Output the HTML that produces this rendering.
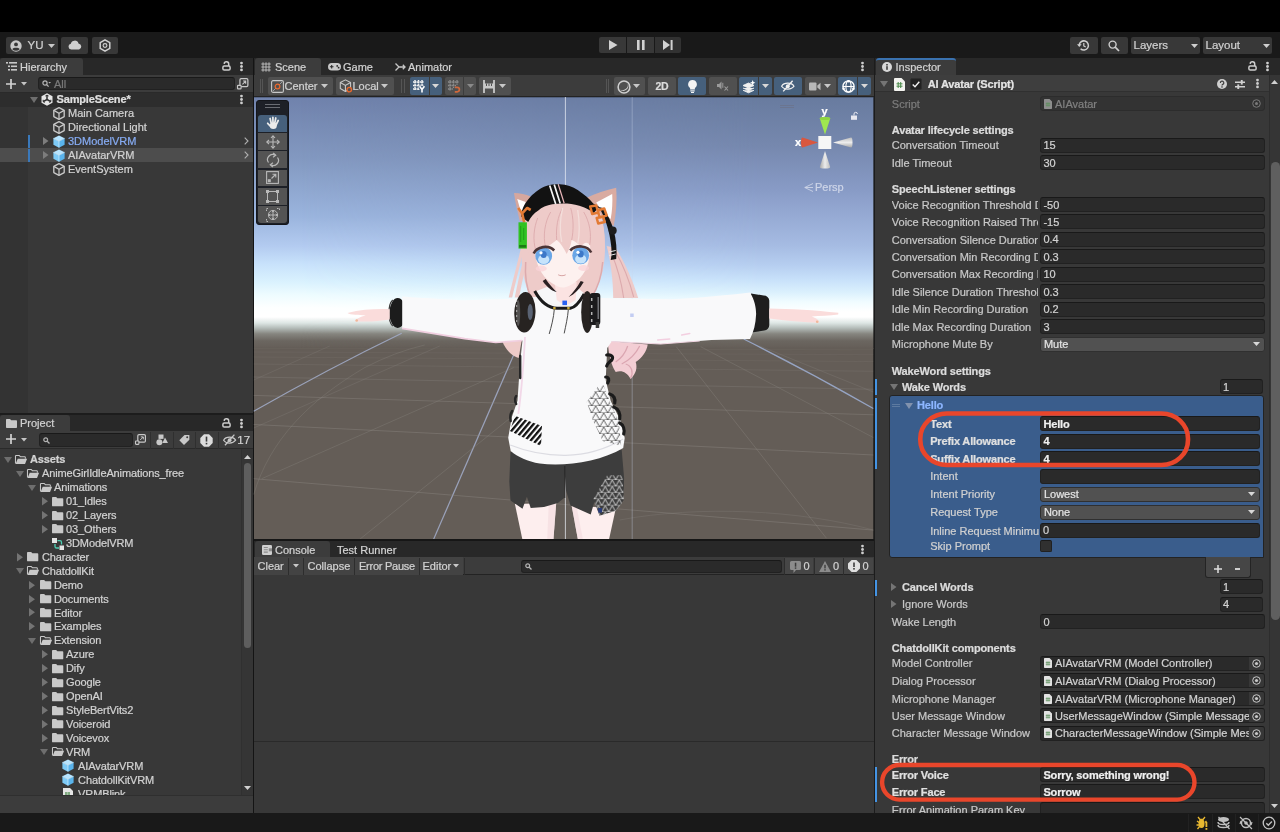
<!DOCTYPE html>
<html lang="en"><head><meta charset="utf-8"><title>Unity - SampleScene</title>
<style>
*{box-sizing:border-box;margin:0;padding:0}
html,body{width:1280px;height:832px;overflow:hidden;background:#191919}
body{position:relative;font-family:"Liberation Sans",sans-serif;font-size:11px;color:#cdcdcd;line-height:14px}
#root{position:absolute;left:0;top:0;width:1280px;height:832px;will-change:transform}
.a{position:absolute}
.t{position:absolute;white-space:nowrap;height:14px;line-height:14px;-webkit-text-stroke:.22px}
.b{font-weight:bold;letter-spacing:-0.15px}
.dim{color:#8a8a8a}
.f{position:absolute;background:#2a2a2a;border:1px solid #212121;border-top-color:#191919;border-radius:3px}
.dd{position:absolute;background:#515151;border:1px solid #303030;border-radius:3px}
.btn{position:absolute;background:#383838;border-radius:2px}
.sb{position:absolute;background:#505050;border-radius:2px;top:77px;height:18px}
.sb.on{background:#46607c}
.tab{position:absolute;background:#3c3c3c;border-radius:3px 3px 0 0}
svg{position:absolute;overflow:visible}
</style></head>
<body>
<div id="root">
<div class="a" style="left:0px;top:0px;width:1280px;height:32px;background:#000;"></div>
<div class="a" style="left:0px;top:32px;width:1280px;height:26px;background:#191919;"></div>
<div class="btn" style="left:6px;top:37px;width:51.5px;height:17px"></div>
<svg style="left:9.5px;top:39.5px" width="12" height="12" viewBox="0 0 12 12"><circle cx="6" cy="6" r="5.7" fill="#c8c8c8"/><circle cx="6" cy="4.4" r="1.9" fill="#383838"/><path d="M2.3 9.2c1-1.9 6.4-1.9 7.4 0a5 5 0 0 1-7.4 0z" fill="#383838"/></svg>
<div class="t " style="left:27.5px;top:38px;color:#d0d0d0;font-size:11.5px">YU</div>
<svg style="left:47.5px;top:43.5px" width="7" height="4" viewBox="0 0 7 4"><path d="M0 0H7L3.5 4Z" fill="#c8c8c8"/></svg>
<div class="btn" style="left:61px;top:37px;width:27px;height:17px"></div>
<svg style="left:67.5px;top:40px" width="14" height="10" viewBox="0 0 14 10"><path d="M3.2 9.6a3 3 0 0 1-.4-5.9 4 4 0 0 1 7.7-.3 3.2 3.2 0 0 1 .6 6.2z" fill="#cfcfcf"/></svg>
<div class="btn" style="left:91.5px;top:37px;width:26px;height:17px"></div>
<svg style="left:98.5px;top:39px" width="12" height="13" viewBox="0 0 12 13"><path d="M6 .8l4.8 2.8v5.8L6 12.2 1.2 9.4V3.6z" fill="none" stroke="#d0d0d0" stroke-width="1.5" stroke-linejoin="round"/><circle cx="6" cy="6.5" r="1.9" fill="none" stroke="#d0d0d0" stroke-width="1.1"/></svg>
<div class="btn" style="left:599px;top:37px;width:27.3px;height:16px;border-radius:2px 0 0 2px"></div>
<div class="btn" style="left:627px;top:37px;width:26.8px;height:16px;border-radius:0"></div>
<div class="btn" style="left:654.5px;top:37px;width:26.5px;height:16px;background:#323232;border-radius:0 2px 2px 0"></div>
<svg style="left:608.5px;top:40px" width="9" height="10" viewBox="0 0 9 10"><path d="M0 0v10l8.5-5z" fill="#d2d2d2"/></svg>
<svg style="left:636.5px;top:40px" width="8" height="10" viewBox="0 0 8 10"><rect x="0" width="2.6" height="10" fill="#d2d2d2"/><rect x="5" width="2.6" height="10" fill="#d2d2d2"/></svg>
<svg style="left:663px;top:40px" width="10" height="10" viewBox="0 0 10 10"><path d="M0 0v10l7-5z" fill="#d2d2d2"/><rect x="7.6" width="2" height="10" fill="#d2d2d2"/></svg>
<div class="btn" style="left:1070px;top:37px;width:27.5px;height:16.5px"></div>
<svg style="left:1077px;top:39px" width="13" height="13" viewBox="0 0 13 13"><path d="M2.2 6.5a4.6 4.6 0 1 1 1.4 3.3" fill="none" stroke="#cfcfcf" stroke-width="1.5"/><path d="M0 5.2h4.6L2.3 8z" fill="#cfcfcf"/><path d="M6.8 4v2.9l1.9 1.1" fill="none" stroke="#cfcfcf" stroke-width="1.2"/></svg>
<div class="btn" style="left:1100.5px;top:37px;width:27.3px;height:16.5px"></div>
<svg style="left:1108px;top:39.5px" width="12" height="12" viewBox="0 0 12 12"><circle cx="4.6" cy="4.6" r="3.5" fill="none" stroke="#cfcfcf" stroke-width="1.4"/><path d="M7.2 7.2l3.8 3.8" stroke="#cfcfcf" stroke-width="1.7"/></svg>
<div class="btn" style="left:1131px;top:37px;width:69px;height:16.5px"></div>
<div class="t " style="left:1133.5px;top:38px;color:#d0d0d0;font-size:11.5px">Layers</div>
<svg style="left:1190.5px;top:43.5px" width="7" height="4" viewBox="0 0 7 4"><path d="M0 0H7L3.5 4Z" fill="#d0d0d0"/></svg>
<div class="btn" style="left:1203px;top:37px;width:69px;height:16.5px"></div>
<div class="t " style="left:1205.5px;top:38px;color:#d0d0d0;font-size:11.5px">Layout</div>
<svg style="left:1262.5px;top:43.5px" width="7" height="4" viewBox="0 0 7 4"><path d="M0 0H7L3.5 4Z" fill="#d0d0d0"/></svg>
<div class="a" style="left:0px;top:813px;width:1280px;height:19px;background:#191919;"></div>
<div class="a" style="left:0px;top:58px;width:252.7px;height:355px;background:#383838;"></div>
<div class="a" style="left:0px;top:58px;width:252.7px;height:17px;background:#282828;"></div>
<div class="tab" style="left:0;top:58px;width:82.5px;height:17px"></div>
<svg style="left:6px;top:62px" width="11" height="9" viewBox="0 0 11 9"><rect x="0" y="0" width="2" height="1.6" fill="#c8c8c8"/><rect x="3" y="0" width="8" height="1.6" fill="#c8c8c8"/><rect x="2" y="3.5" width="2" height="1.6" fill="#c8c8c8"/><rect x="5" y="3.5" width="6" height="1.6" fill="#c8c8c8"/><rect x="2" y="7" width="2" height="1.6" fill="#c8c8c8"/><rect x="5" y="7" width="6" height="1.6" fill="#c8c8c8"/></svg>
<div class="t " style="left:20px;top:60px;color:#d2d2d2">Hierarchy</div>
<svg style="left:221.5px;top:61px" width="9" height="10" viewBox="0 0 9 10"><path d="M2.2 2.9a2.25 2.25 0 0 1 4.5 .2V5" fill="none" stroke="#cdcdcd" stroke-width="1.5"/><rect x=".9" y="5.1" width="7.2" height="4" rx="1.3" fill="none" stroke="#cdcdcd" stroke-width="1.5"/></svg>
<svg style="left:240px;top:62px" width="3" height="9" viewBox="0 0 3 9"><circle cx="1.5" cy="1.1" r="1.4" fill="#cdcdcd"/><circle cx="1.5" cy="4.5" r="1.4" fill="#cdcdcd"/><circle cx="1.5" cy="7.9" r="1.4" fill="#cdcdcd"/></svg>
<div class="a" style="left:0px;top:75px;width:252.7px;height:17.5px;background:#3c3c3c;border-bottom:1px solid #2a2a2a"></div>
<svg style="left:6px;top:79px" width="10" height="10" viewBox="0 0 10 10"><path d="M5 0v10M0 5h10" stroke="#d2d2d2" stroke-width="1.7"/></svg>
<svg style="left:20.5px;top:82.25px" width="6" height="3.5" viewBox="0 0 6 3.5"><path d="M0 0H6L3 3.5Z" fill="#c4c4c4"/></svg>
<div class="f" style="left:37.5px;top:77px;width:197.5px;height:13px;border-radius:3px"></div>
<svg style="left:41.5px;top:80px" width="9" height="8" viewBox="0 0 9 8"><circle cx="3" cy="3" r="2.1" fill="none" stroke="#b4b4b4" stroke-width="1.2"/><path d="M4.6 4.6l2 2" stroke="#b4b4b4" stroke-width="1.3"/><path d="M6.3 2h2.7l-1.35 1.6z" fill="#b4b4b4"/></svg>
<div class="t " style="left:54px;top:77px;color:#7a7a7a">All</div>
<svg style="left:236.8px;top:77.6px" width="11.5" height="11.5" viewBox="0 0 11 11"><rect x="2.8" y=".6" width="7.6" height="7.6" rx="1.2" fill="none" stroke="#c8c8c8" stroke-width="1.2"/><path d="M5.2 6l3-3M5.8 2.9h2.5v2.5" fill="none" stroke="#c8c8c8" stroke-width="1"/><rect x=".5" y="7" width="3.4" height="3.4" rx=".6" fill="#3c3c3c" stroke="#c8c8c8" stroke-width="1.1"/></svg>
<div class="a" style="left:0px;top:106.5px;width:28px;height:306.5px;background:#333333;"></div>
<div class="a" style="left:0px;top:92.5px;width:252.7px;height:14px;background:#2d2d2d;"></div>
<div class="a" style="left:0px;top:148.2px;width:252.7px;height:14px;background:#4d4d4d;"></div>
<div class="a" style="left:28px;top:134.5px;width:1.5px;height:13.2px;background:#3a79bb;"></div>
<div class="a" style="left:28px;top:148.5px;width:1.5px;height:13.2px;background:#3a79bb;"></div>
<svg style="left:29.700000000000003px;top:96.7px" width="8" height="6" viewBox="0 0 8 6"><path d="M0 0H8L4 6Z" fill="#6e6e6e"/></svg>
<svg style="left:41px;top:93px" width="12" height="13" viewBox="0 0 12 13"><path d="M6 .3l5.5 3v6.4L6 12.7.5 9.7V3.3z" fill="#e6e6e6"/><path d="M6 6.5V2.2M6 6.5l3.8 2.1M6 6.5L2.2 8.6" stroke="#2d2d2d" stroke-width="1.5" fill="none"/><path d="M4.4 3l1.6-.9 1.6.9M9.8 6.8v1.8l-1.5.9M2.2 6.8v1.8l1.5.9" stroke="#2d2d2d" stroke-width="1" fill="none"/></svg>
<div class="t b" style="left:56.5px;top:92px;color:#e0e0e0">SampleScene*</div>
<svg style="left:240px;top:95px" width="3" height="9" viewBox="0 0 3 9"><circle cx="1.5" cy="1.1" r="1.4" fill="#cdcdcd"/><circle cx="1.5" cy="4.5" r="1.4" fill="#cdcdcd"/><circle cx="1.5" cy="7.9" r="1.4" fill="#cdcdcd"/></svg>
<svg style="left:53px;top:107px" width="12" height="13" viewBox="0 0 12 13"><path d="M6 .7l5.2 2.7v6.2L6 12.3.8 9.6V3.4z" fill="none" stroke="#c8c8c8" stroke-width="1.35" stroke-linejoin="round"/><path d="M.8 3.4L6 6.2l5.2-2.8M6 6.2v6.1" fill="none" stroke="#c8c8c8" stroke-width="1.25"/></svg>
<div class="t " style="left:68px;top:106px;color:#d2d2d2">Main Camera</div>
<svg style="left:53px;top:120.9px" width="12" height="13" viewBox="0 0 12 13"><path d="M6 .7l5.2 2.7v6.2L6 12.3.8 9.6V3.4z" fill="none" stroke="#c8c8c8" stroke-width="1.35" stroke-linejoin="round"/><path d="M.8 3.4L6 6.2l5.2-2.8M6 6.2v6.1" fill="none" stroke="#c8c8c8" stroke-width="1.25"/></svg>
<div class="t " style="left:68px;top:120px;color:#d2d2d2">Directional Light</div>
<svg style="left:42.95px;top:137.3px" width="5.5" height="8" viewBox="0 0 5.5 8"><path d="M0 0V8L5.5 4Z" fill="#7d7d7d"/></svg>
<svg style="left:53px;top:134.8px" width="12" height="13" viewBox="0 0 12 13"><path d="M6 .4l5.6 2.9L6 6.2.4 3.3z" fill="#b6e4ff"/><path d="M.4 3.3L6 6.2v6.5L.4 9.8z" fill="#7ecbf7"/><path d="M11.6 3.3L6 6.2v6.5l5.6-2.9z" fill="#5ab4ec"/><path d="M.4 3.3L6 6.2l5.6-2.9M6 6.2v6.4" fill="none" stroke="#e8f6ff" stroke-width=".6"/></svg>
<svg style="left:243.5px;top:137.3px" width="5" height="8" viewBox="0 0 5 8"><path d="M.7.7L4 4 .7 7.3" fill="none" stroke="#b0b0b0" stroke-width="1.1"/></svg>
<div class="t " style="left:68px;top:134px;color:#86abf2">3DModelVRM</div>
<svg style="left:42.95px;top:151.3px" width="5.5" height="8" viewBox="0 0 5.5 8"><path d="M0 0V8L5.5 4Z" fill="#7d7d7d"/></svg>
<svg style="left:53px;top:148.8px" width="12" height="13" viewBox="0 0 12 13"><path d="M6 .4l5.6 2.9L6 6.2.4 3.3z" fill="#b6e4ff"/><path d="M.4 3.3L6 6.2v6.5L.4 9.8z" fill="#7ecbf7"/><path d="M11.6 3.3L6 6.2v6.5l5.6-2.9z" fill="#5ab4ec"/><path d="M.4 3.3L6 6.2l5.6-2.9M6 6.2v6.4" fill="none" stroke="#e8f6ff" stroke-width=".6"/></svg>
<svg style="left:243.5px;top:151.3px" width="5" height="8" viewBox="0 0 5 8"><path d="M.7.7L4 4 .7 7.3" fill="none" stroke="#b0b0b0" stroke-width="1.1"/></svg>
<div class="t " style="left:68px;top:148px;color:#d2d2d2">AIAvatarVRM</div>
<svg style="left:53px;top:162.7px" width="12" height="13" viewBox="0 0 12 13"><path d="M6 .7l5.2 2.7v6.2L6 12.3.8 9.6V3.4z" fill="none" stroke="#c8c8c8" stroke-width="1.35" stroke-linejoin="round"/><path d="M.8 3.4L6 6.2l5.2-2.8M6 6.2v6.1" fill="none" stroke="#c8c8c8" stroke-width="1.25"/></svg>
<div class="t " style="left:68px;top:162px;color:#d2d2d2">EventSystem</div>
<div class="a" style="left:0px;top:413px;width:252.7px;height:1.5px;background:#1c1c1c;"></div>
<div class="a" style="left:0px;top:414.5px;width:252.7px;height:398.5px;background:#383838;"></div>
<div class="a" style="left:0px;top:414.5px;width:252.7px;height:16.3px;background:#282828;"></div>
<div class="tab" style="left:0;top:414.5px;width:69.5px;height:16.3px"></div>
<svg style="left:6px;top:418.5px" width="11" height="9" viewBox="0 0 11 9"><path d="M0 8.2V.8A.8.8 0 0 1 .8 0h3.2l1.2 1.3h5a.8.8 0 0 1 .8.8v6.1a.8.8 0 0 1-.8.8H.8A.8.8 0 0 1 0 8.2z" fill="#c8c8c8"/></svg>
<div class="t " style="left:20px;top:416px;color:#d2d2d2">Project</div>
<svg style="left:221.5px;top:417.5px" width="9" height="10" viewBox="0 0 9 10"><path d="M2.2 2.9a2.25 2.25 0 0 1 4.5 .2V5" fill="none" stroke="#cdcdcd" stroke-width="1.5"/><rect x=".9" y="5.1" width="7.2" height="4" rx="1.3" fill="none" stroke="#cdcdcd" stroke-width="1.5"/></svg>
<svg style="left:240px;top:418.5px" width="3" height="9" viewBox="0 0 3 9"><circle cx="1.5" cy="1.1" r="1.4" fill="#cdcdcd"/><circle cx="1.5" cy="4.5" r="1.4" fill="#cdcdcd"/><circle cx="1.5" cy="7.9" r="1.4" fill="#cdcdcd"/></svg>
<div class="a" style="left:0px;top:430.8px;width:252.7px;height:18.5px;background:#3c3c3c;border-bottom:1px solid #2a2a2a"></div>
<svg style="left:6px;top:434px" width="10" height="10" viewBox="0 0 10 10"><path d="M5 0v10M0 5h10" stroke="#d2d2d2" stroke-width="1.7"/></svg>
<svg style="left:20.5px;top:437.75px" width="6" height="3.5" viewBox="0 0 6 3.5"><path d="M0 0H6L3 3.5Z" fill="#c4c4c4"/></svg>
<div class="f" style="left:39px;top:433px;width:93.5px;height:13.5px"></div>
<svg style="left:43px;top:436.5px" width="7" height="7" viewBox="0 0 7 7"><circle cx="2.7" cy="2.7" r="1.9" fill="none" stroke="#b4b4b4" stroke-width="1.2"/><path d="M4.2 4.2l2.3 2.3" stroke="#b4b4b4" stroke-width="1.3"/></svg>
<svg style="left:134.5px;top:434px" width="11" height="11" viewBox="0 0 11 11"><rect x="2.8" y=".6" width="7.6" height="7.6" rx="1.2" fill="none" stroke="#c8c8c8" stroke-width="1.2"/><path d="M5.2 6l3-3M5.8 2.9h2.5v2.5" fill="none" stroke="#c8c8c8" stroke-width="1"/><rect x=".5" y="7" width="3.4" height="3.4" rx=".6" fill="#3c3c3c" stroke="#c8c8c8" stroke-width="1.1"/></svg>
<div class="a" style="left:150.3px;top:431.5px;width:1px;height:17px;background:#2f2f2f;"></div>
<div class="a" style="left:172.5px;top:431.5px;width:1px;height:17px;background:#2f2f2f;"></div>
<div class="a" style="left:195px;top:431.5px;width:1px;height:17px;background:#2f2f2f;"></div>
<div class="a" style="left:217.5px;top:431.5px;width:1px;height:17px;background:#2f2f2f;"></div>
<svg style="left:155.5px;top:434px" width="12" height="12" viewBox="0 0 12 12"><circle cx="3.4" cy="8.3" r="3" fill="#c8c8c8"/><rect x="2.5" y=".5" width="5" height="4.4" fill="#c8c8c8"/><path d="M9 3.6l3 5.4H6.4z" fill="#c8c8c8"/></svg>
<svg style="left:178.5px;top:435px" width="11" height="10" viewBox="0 0 11 10"><path d="M5.5 0H10.4V4.8L5 10 .3 5.3z" fill="#c8c8c8"/><circle cx="8.2" cy="2.2" r="1" fill="#3c3c3c"/></svg>
<svg style="left:199.5px;top:433.5px" width="13" height="13" viewBox="0 0 13 13"><path d="M4 .3h5l3.7 3.7v5L9 12.7H4L.3 9V4z" fill="#dcdcdc"/><rect x="5.7" y="2.6" width="1.6" height="5" fill="#3c3c3c"/><rect x="5.7" y="8.8" width="1.6" height="1.6" fill="#3c3c3c"/></svg>
<svg style="left:222.5px;top:434px" width="14" height="12" viewBox="0 0 14 12"><path d="M.6 6.2C3 2.2 10 2.2 12.6 6.2 10 10 3 10 .6 6.2z" fill="none" stroke="#c8c8c8" stroke-width="1.2"/><circle cx="6.6" cy="6.2" r="1.9" fill="#c8c8c8"/><path d="M2 11.2L11.4.6" stroke="#c8c8c8" stroke-width="1.3"/></svg>
<div class="t " style="left:237.3px;top:433px;color:#d2d2d2;font-size:11.5px">17</div>
<div class="a" style="left:241.4px;top:449.3px;width:11.3px;height:345.5px;background:#353535;border-left:1px solid #303030"></div>
<svg style="left:243.8px;top:454.5px" width="7" height="4" viewBox="0 0 7 4"><path d="M0 4h7L3.5 0z" fill="#d0d0d0"/></svg>
<div class="a" style="left:243.8px;top:462.5px;width:7.2px;height:185px;background:#5e5e5e;border-radius:3.6px"></div>
<svg style="left:243.8px;top:785.5px" width="7" height="4" viewBox="0 0 7 4"><path d="M0 0h7L3.5 4z" fill="#d0d0d0"/></svg>
<div class="a" style="left:0;top:449px;width:241px;height:346px;overflow:hidden">
<svg style="left:3.5px;top:7.800000000000001px" width="8" height="6" viewBox="0 0 8 6"><path d="M0 0H8L4 6Z" fill="#6e6e6e"/></svg>
<svg style="left:14.8px;top:5.8px" width="12.2" height="9.4" viewBox="0 0 13 10"><path d="M.5 9V1.2a.7.7 0 0 1 .7-.7h3.3l1.2 1.3h4.6a.7.7 0 0 1 .7.7V4" fill="none" stroke="#c9c9c9" stroke-width="1.1"/><path d="M.6 9.6L2.9 4h10L10.7 9.6z" fill="#c9c9c9"/></svg>
<div class="t b" style="left:29.9px;top:3px;color:#d2d2d2;letter-spacing:-0.12px">Assets</div>
<svg style="left:15.8px;top:21.730000000000008px" width="8" height="6" viewBox="0 0 8 6"><path d="M0 0H8L4 6Z" fill="#6e6e6e"/></svg>
<svg style="left:27.2px;top:19.730000000000008px" width="12.2" height="9.4" viewBox="0 0 13 10"><path d="M.5 9V1.2a.7.7 0 0 1 .7-.7h3.3l1.2 1.3h4.6a.7.7 0 0 1 .7.7V4" fill="none" stroke="#c9c9c9" stroke-width="1.1"/><path d="M.6 9.6L2.9 4h10L10.7 9.6z" fill="#c9c9c9"/></svg>
<div class="t " style="left:41.95px;top:17px;color:#d2d2d2;letter-spacing:-0.12px">AnimeGirlIdleAnimations_free</div>
<svg style="left:28.1px;top:35.66000000000001px" width="8" height="6" viewBox="0 0 8 6"><path d="M0 0H8L4 6Z" fill="#6e6e6e"/></svg>
<svg style="left:39.599999999999994px;top:33.66000000000001px" width="12.2" height="9.4" viewBox="0 0 13 10"><path d="M.5 9V1.2a.7.7 0 0 1 .7-.7h3.3l1.2 1.3h4.6a.7.7 0 0 1 .7.7V4" fill="none" stroke="#c9c9c9" stroke-width="1.1"/><path d="M.6 9.6L2.9 4h10L10.7 9.6z" fill="#c9c9c9"/></svg>
<div class="t " style="left:54px;top:31px;color:#d2d2d2;letter-spacing:-0.12px">Animations</div>
<svg style="left:41.7px;top:48.04000000000002px" width="6" height="8.5" viewBox="0 0 6 8.5"><path d="M0 0V8.5L6 4.25Z" fill="#747474"/></svg>
<svg style="left:52px;top:47.59000000000002px" width="11.3" height="9.4" viewBox="0 0 12 10"><path d="M0 9V.9A.9.9 0 0 1 .9 0h3.5l1.3 1.4h5.4a.9.9 0 0 1 .9.9V9a.9.9 0 0 1-.9.9H.9A.9.9 0 0 1 0 9z" fill="#c9c9c9"/></svg>
<div class="t " style="left:66.05000000000001px;top:45px;color:#d2d2d2;letter-spacing:-0.12px">01_Idles</div>
<svg style="left:41.7px;top:61.97000000000003px" width="6" height="8.5" viewBox="0 0 6 8.5"><path d="M0 0V8.5L6 4.25Z" fill="#747474"/></svg>
<svg style="left:52px;top:61.520000000000024px" width="11.3" height="9.4" viewBox="0 0 12 10"><path d="M0 9V.9A.9.9 0 0 1 .9 0h3.5l1.3 1.4h5.4a.9.9 0 0 1 .9.9V9a.9.9 0 0 1-.9.9H.9A.9.9 0 0 1 0 9z" fill="#c9c9c9"/></svg>
<div class="t " style="left:66.05000000000001px;top:59px;color:#d2d2d2;letter-spacing:-0.12px">02_Layers</div>
<svg style="left:41.7px;top:75.89999999999998px" width="6" height="8.5" viewBox="0 0 6 8.5"><path d="M0 0V8.5L6 4.25Z" fill="#747474"/></svg>
<svg style="left:52px;top:75.44999999999997px" width="11.3" height="9.4" viewBox="0 0 12 10"><path d="M0 9V.9A.9.9 0 0 1 .9 0h3.5l1.3 1.4h5.4a.9.9 0 0 1 .9.9V9a.9.9 0 0 1-.9.9H.9A.9.9 0 0 1 0 9z" fill="#c9c9c9"/></svg>
<div class="t " style="left:66.05000000000001px;top:73px;color:#d2d2d2;letter-spacing:-0.12px">03_Others</div>
<svg style="left:51.7px;top:88.58000000000004px" width="12" height="12" viewBox="0 0 12 12"><rect x="0" y="0" width="5" height="5" fill="#e4e4e4"/><rect x="7.5" y="7.5" width="4.5" height="4.5" fill="#e4e4e4"/><path d="M3 6v2.4a1.6 1.6 0 0 0 1.6 1.6H7M9.5 6.5V4.2A1.6 1.6 0 0 0 7.9 2.6H5.5" fill="none" stroke="#4fd1b4" stroke-width="1.3"/></svg>
<div class="t " style="left:66.05000000000001px;top:87px;color:#d2d2d2;letter-spacing:-0.12px">3DModelVRM</div>
<svg style="left:17.1px;top:103.75999999999999px" width="6" height="8.5" viewBox="0 0 6 8.5"><path d="M0 0V8.5L6 4.25Z" fill="#747474"/></svg>
<svg style="left:27.2px;top:103.30999999999999px" width="11.3" height="9.4" viewBox="0 0 12 10"><path d="M0 9V.9A.9.9 0 0 1 .9 0h3.5l1.3 1.4h5.4a.9.9 0 0 1 .9.9V9a.9.9 0 0 1-.9.9H.9A.9.9 0 0 1 0 9z" fill="#c9c9c9"/></svg>
<div class="t " style="left:41.95px;top:101px;color:#d2d2d2;letter-spacing:-0.12px">Character</div>
<svg style="left:15.8px;top:119.24000000000005px" width="8" height="6" viewBox="0 0 8 6"><path d="M0 0H8L4 6Z" fill="#6e6e6e"/></svg>
<svg style="left:27.2px;top:117.24000000000005px" width="12.2" height="9.4" viewBox="0 0 13 10"><path d="M.5 9V1.2a.7.7 0 0 1 .7-.7h3.3l1.2 1.3h4.6a.7.7 0 0 1 .7.7V4" fill="none" stroke="#c9c9c9" stroke-width="1.1"/><path d="M.6 9.6L2.9 4h10L10.7 9.6z" fill="#c9c9c9"/></svg>
<div class="t " style="left:41.95px;top:115px;color:#d2d2d2;letter-spacing:-0.12px">ChatdollKit</div>
<svg style="left:29.4px;top:131.62px" width="6" height="8.5" viewBox="0 0 6 8.5"><path d="M0 0V8.5L6 4.25Z" fill="#747474"/></svg>
<svg style="left:39.599999999999994px;top:131.17000000000002px" width="11.3" height="9.4" viewBox="0 0 12 10"><path d="M0 9V.9A.9.9 0 0 1 .9 0h3.5l1.3 1.4h5.4a.9.9 0 0 1 .9.9V9a.9.9 0 0 1-.9.9H.9A.9.9 0 0 1 0 9z" fill="#c9c9c9"/></svg>
<div class="t " style="left:54px;top:129px;color:#d2d2d2;letter-spacing:-0.12px">Demo</div>
<svg style="left:29.4px;top:145.54999999999995px" width="6" height="8.5" viewBox="0 0 6 8.5"><path d="M0 0V8.5L6 4.25Z" fill="#747474"/></svg>
<svg style="left:39.599999999999994px;top:145.09999999999997px" width="11.3" height="9.4" viewBox="0 0 12 10"><path d="M0 9V.9A.9.9 0 0 1 .9 0h3.5l1.3 1.4h5.4a.9.9 0 0 1 .9.9V9a.9.9 0 0 1-.9.9H.9A.9.9 0 0 1 0 9z" fill="#c9c9c9"/></svg>
<div class="t " style="left:54px;top:143px;color:#d2d2d2;letter-spacing:-0.12px">Documents</div>
<svg style="left:29.4px;top:159.48000000000002px" width="6" height="8.5" viewBox="0 0 6 8.5"><path d="M0 0V8.5L6 4.25Z" fill="#747474"/></svg>
<svg style="left:39.599999999999994px;top:159.03000000000003px" width="11.3" height="9.4" viewBox="0 0 12 10"><path d="M0 9V.9A.9.9 0 0 1 .9 0h3.5l1.3 1.4h5.4a.9.9 0 0 1 .9.9V9a.9.9 0 0 1-.9.9H.9A.9.9 0 0 1 0 9z" fill="#c9c9c9"/></svg>
<div class="t " style="left:54px;top:157px;color:#d2d2d2;letter-spacing:-0.12px">Editor</div>
<svg style="left:29.4px;top:173.40999999999997px" width="6" height="8.5" viewBox="0 0 6 8.5"><path d="M0 0V8.5L6 4.25Z" fill="#747474"/></svg>
<svg style="left:39.599999999999994px;top:172.95999999999998px" width="11.3" height="9.4" viewBox="0 0 12 10"><path d="M0 9V.9A.9.9 0 0 1 .9 0h3.5l1.3 1.4h5.4a.9.9 0 0 1 .9.9V9a.9.9 0 0 1-.9.9H.9A.9.9 0 0 1 0 9z" fill="#c9c9c9"/></svg>
<div class="t " style="left:54px;top:170px;color:#d2d2d2;letter-spacing:-0.12px">Examples</div>
<svg style="left:28.1px;top:188.89000000000004px" width="8" height="6" viewBox="0 0 8 6"><path d="M0 0H8L4 6Z" fill="#6e6e6e"/></svg>
<svg style="left:39.599999999999994px;top:186.89000000000004px" width="12.2" height="9.4" viewBox="0 0 13 10"><path d="M.5 9V1.2a.7.7 0 0 1 .7-.7h3.3l1.2 1.3h4.6a.7.7 0 0 1 .7.7V4" fill="none" stroke="#c9c9c9" stroke-width="1.1"/><path d="M.6 9.6L2.9 4h10L10.7 9.6z" fill="#c9c9c9"/></svg>
<div class="t " style="left:54px;top:184px;color:#d2d2d2;letter-spacing:-0.12px">Extension</div>
<svg style="left:41.7px;top:201.26999999999998px" width="6" height="8.5" viewBox="0 0 6 8.5"><path d="M0 0V8.5L6 4.25Z" fill="#747474"/></svg>
<svg style="left:52px;top:200.82px" width="11.3" height="9.4" viewBox="0 0 12 10"><path d="M0 9V.9A.9.9 0 0 1 .9 0h3.5l1.3 1.4h5.4a.9.9 0 0 1 .9.9V9a.9.9 0 0 1-.9.9H.9A.9.9 0 0 1 0 9z" fill="#c9c9c9"/></svg>
<div class="t " style="left:66.05000000000001px;top:198px;color:#d2d2d2;letter-spacing:-0.12px">Azure</div>
<svg style="left:41.7px;top:215.20000000000005px" width="6" height="8.5" viewBox="0 0 6 8.5"><path d="M0 0V8.5L6 4.25Z" fill="#747474"/></svg>
<svg style="left:52px;top:214.75000000000006px" width="11.3" height="9.4" viewBox="0 0 12 10"><path d="M0 9V.9A.9.9 0 0 1 .9 0h3.5l1.3 1.4h5.4a.9.9 0 0 1 .9.9V9a.9.9 0 0 1-.9.9H.9A.9.9 0 0 1 0 9z" fill="#c9c9c9"/></svg>
<div class="t " style="left:66.05000000000001px;top:212px;color:#d2d2d2;letter-spacing:-0.12px">Dify</div>
<svg style="left:41.7px;top:229.13px" width="6" height="8.5" viewBox="0 0 6 8.5"><path d="M0 0V8.5L6 4.25Z" fill="#747474"/></svg>
<svg style="left:52px;top:228.68px" width="11.3" height="9.4" viewBox="0 0 12 10"><path d="M0 9V.9A.9.9 0 0 1 .9 0h3.5l1.3 1.4h5.4a.9.9 0 0 1 .9.9V9a.9.9 0 0 1-.9.9H.9A.9.9 0 0 1 0 9z" fill="#c9c9c9"/></svg>
<div class="t " style="left:66.05000000000001px;top:226px;color:#d2d2d2;letter-spacing:-0.12px">Google</div>
<svg style="left:41.7px;top:243.05999999999995px" width="6" height="8.5" viewBox="0 0 6 8.5"><path d="M0 0V8.5L6 4.25Z" fill="#747474"/></svg>
<svg style="left:52px;top:242.60999999999996px" width="11.3" height="9.4" viewBox="0 0 12 10"><path d="M0 9V.9A.9.9 0 0 1 .9 0h3.5l1.3 1.4h5.4a.9.9 0 0 1 .9.9V9a.9.9 0 0 1-.9.9H.9A.9.9 0 0 1 0 9z" fill="#c9c9c9"/></svg>
<div class="t " style="left:66.05000000000001px;top:240px;color:#d2d2d2;letter-spacing:-0.12px">OpenAI</div>
<svg style="left:41.7px;top:256.99px" width="6" height="8.5" viewBox="0 0 6 8.5"><path d="M0 0V8.5L6 4.25Z" fill="#747474"/></svg>
<svg style="left:52px;top:256.54px" width="11.3" height="9.4" viewBox="0 0 12 10"><path d="M0 9V.9A.9.9 0 0 1 .9 0h3.5l1.3 1.4h5.4a.9.9 0 0 1 .9.9V9a.9.9 0 0 1-.9.9H.9A.9.9 0 0 1 0 9z" fill="#c9c9c9"/></svg>
<div class="t " style="left:66.05000000000001px;top:254px;color:#d2d2d2;letter-spacing:-0.12px">StyleBertVits2</div>
<svg style="left:41.7px;top:270.9200000000001px" width="6" height="8.5" viewBox="0 0 6 8.5"><path d="M0 0V8.5L6 4.25Z" fill="#747474"/></svg>
<svg style="left:52px;top:270.4700000000001px" width="11.3" height="9.4" viewBox="0 0 12 10"><path d="M0 9V.9A.9.9 0 0 1 .9 0h3.5l1.3 1.4h5.4a.9.9 0 0 1 .9.9V9a.9.9 0 0 1-.9.9H.9A.9.9 0 0 1 0 9z" fill="#c9c9c9"/></svg>
<div class="t " style="left:66.05000000000001px;top:268px;color:#d2d2d2;letter-spacing:-0.12px">Voiceroid</div>
<svg style="left:41.7px;top:284.85px" width="6" height="8.5" viewBox="0 0 6 8.5"><path d="M0 0V8.5L6 4.25Z" fill="#747474"/></svg>
<svg style="left:52px;top:284.40000000000003px" width="11.3" height="9.4" viewBox="0 0 12 10"><path d="M0 9V.9A.9.9 0 0 1 .9 0h3.5l1.3 1.4h5.4a.9.9 0 0 1 .9.9V9a.9.9 0 0 1-.9.9H.9A.9.9 0 0 1 0 9z" fill="#c9c9c9"/></svg>
<div class="t " style="left:66.05000000000001px;top:282px;color:#d2d2d2;letter-spacing:-0.12px">Voicevox</div>
<svg style="left:40.400000000000006px;top:300.33px" width="8" height="6" viewBox="0 0 8 6"><path d="M0 0H8L4 6Z" fill="#6e6e6e"/></svg>
<svg style="left:52px;top:298.33px" width="12.2" height="9.4" viewBox="0 0 13 10"><path d="M.5 9V1.2a.7.7 0 0 1 .7-.7h3.3l1.2 1.3h4.6a.7.7 0 0 1 .7.7V4" fill="none" stroke="#c9c9c9" stroke-width="1.1"/><path d="M.6 9.6L2.9 4h10L10.7 9.6z" fill="#c9c9c9"/></svg>
<div class="t " style="left:66.05000000000001px;top:296px;color:#d2d2d2;letter-spacing:-0.12px">VRM</div>
<svg style="left:62.099999999999994px;top:310.46000000000004px" width="12" height="13" viewBox="0 0 12 13"><path d="M6 .4l5.6 2.9L6 6.2.4 3.3z" fill="#b6e4ff"/><path d="M.4 3.3L6 6.2v6.5L.4 9.8z" fill="#7ecbf7"/><path d="M11.6 3.3L6 6.2v6.5l5.6-2.9z" fill="#5ab4ec"/><path d="M.4 3.3L6 6.2l5.6-2.9M6 6.2v6.4" fill="none" stroke="#e8f6ff" stroke-width=".6"/></svg>
<div class="t " style="left:78.1px;top:310px;color:#d2d2d2;letter-spacing:-0.12px">AIAvatarVRM</div>
<svg style="left:62.099999999999994px;top:324.39px" width="12" height="13" viewBox="0 0 12 13"><path d="M6 .4l5.6 2.9L6 6.2.4 3.3z" fill="#b6e4ff"/><path d="M.4 3.3L6 6.2v6.5L.4 9.8z" fill="#7ecbf7"/><path d="M11.6 3.3L6 6.2v6.5l5.6-2.9z" fill="#5ab4ec"/><path d="M.4 3.3L6 6.2l5.6-2.9M6 6.2v6.4" fill="none" stroke="#e8f6ff" stroke-width=".6"/></svg>
<div class="t " style="left:78.1px;top:324px;color:#d2d2d2;letter-spacing:-0.12px">ChatdollKitVRM</div>
<svg style="left:63.099999999999994px;top:338.81999999999994px" width="10" height="12" viewBox="0 0 10 12"><path d="M0 0h7l3 3v9H0z" fill="#e6e6e6"/><path d="M3 4v4M6 4v4M2 5h5M2 7h5" stroke="#4a8a4a" stroke-width=".8"/></svg>
<div class="t " style="left:78.1px;top:338px;color:#d2d2d2;letter-spacing:-0.12px">VRMBlink</div>
</div>
<div class="a" style="left:0px;top:795px;width:252.7px;height:18px;background:#3c3c3c;border-top:1px solid #2f2f2f"></div>
<div class="a" style="left:252.7px;top:58px;width:1.6px;height:755px;background:#141414;"></div>
<div class="a" style="left:254.3px;top:58px;width:619.3px;height:17px;background:#282828;"></div>
<div class="tab" style="left:254.5px;top:58px;width:66.5px;height:17px"></div>
<svg style="left:261px;top:61.5px" width="10" height="10" viewBox="0 0 10 10"><path d="M2 .3v9.4M5 .3v9.4M8 .3v9.4M.3 2h9.4M.3 5h9.4M.3 8h9.4" stroke="#c8c8c8" stroke-width=".85"/></svg>
<div class="t " style="left:275px;top:60px;color:#d2d2d2">Scene</div>
<svg style="left:328px;top:62.5px" width="13" height="8" viewBox="0 0 13 8"><rect x="0" y="0" width="13" height="7.6" rx="3.8" fill="#c8c8c8"/><path d="M3.7 2v3.6M1.9 3.8h3.6" stroke="#282828" stroke-width="1.1"/><circle cx="9.2" cy="2.9" r=".9" fill="#282828"/><circle cx="10.6" cy="4.7" r=".9" fill="#282828"/></svg>
<div class="t " style="left:343px;top:60px;color:#d2d2d2">Game</div>
<svg style="left:395px;top:61.5px" width="11" height="10" viewBox="0 0 11 10"><path d="M.5 1.5l3.5 3.5-3.5 3.5M4 5h6M7.8 2.8L10 5 7.8 7.2" fill="none" stroke="#c8c8c8" stroke-width="1.3"/></svg>
<div class="t " style="left:408px;top:60px;color:#d2d2d2">Animator</div>
<svg style="left:860.5px;top:62px" width="3" height="9" viewBox="0 0 3 9"><circle cx="1.5" cy="1.1" r="1.4" fill="#cdcdcd"/><circle cx="1.5" cy="4.5" r="1.4" fill="#cdcdcd"/><circle cx="1.5" cy="7.9" r="1.4" fill="#cdcdcd"/></svg>
<div class="a" style="left:254.3px;top:75px;width:619.3px;height:22px;background:#3c3c3c;border-bottom:1px solid #232323"></div>
<div class="a" style="left:259.5px;top:79px;width:1px;height:14px;background:#555;"></div>
<div class="a" style="left:262px;top:79px;width:1px;height:14px;background:#555;"></div>
<div class="sb" style="left:268px;width:64.5px"></div>
<svg style="left:271px;top:80px" width="13" height="13" viewBox="0 0 13 13"><rect x=".6" y=".6" width="11.8" height="11.8" rx="1.5" fill="none" stroke="#c8c8c8" stroke-width="1.1"/><path d="M2 11L11 2" stroke="#a8a8a8" stroke-width=".9"/><circle cx="6.5" cy="6.5" r="2.3" fill="#505050" stroke="#e8672c" stroke-width="1.3"/></svg>
<div class="t " style="left:284.5px;top:79px;color:#d2d2d2">Center</div>
<svg style="left:321px;top:84.2px" width="7" height="4" viewBox="0 0 7 4"><path d="M0 0H7L3.5 4Z" fill="#c8c8c8"/></svg>
<div class="sb" style="left:335.7px;width:58px"></div>
<svg style="left:338.5px;top:79px" width="15" height="15" viewBox="0 0 14 14"><path d="M6 .8l4.8 2.5v5.6L6 11.6 1.2 8.9V3.3z" fill="none" stroke="#c8c8c8" stroke-width="1" stroke-linejoin="round"/><path d="M1.2 3.3L6 6l4.8-2.7M6 6v5.6" fill="none" stroke="#c8c8c8" stroke-width="1"/><circle cx="9.6" cy="9.9" r="2.1" fill="#505050" stroke="#e8672c" stroke-width="1.25"/></svg>
<div class="t " style="left:352.5px;top:79px;color:#d2d2d2">Local</div>
<svg style="left:381px;top:84.2px" width="7" height="4" viewBox="0 0 7 4"><path d="M0 0H7L3.5 4Z" fill="#c8c8c8"/></svg>
<div class="a" style="left:401px;top:79px;width:1px;height:14px;background:#555;"></div>
<div class="a" style="left:403.5px;top:79px;width:1px;height:14px;background:#555;"></div>
<div class="sb on" style="left:410px;width:19px;border-radius:2px 0 0 2px"></div>
<div class="sb on" style="left:430px;width:12px;border-radius:0 2px 2px 0"></div>
<svg style="left:413px;top:80px" width="12" height="13" viewBox="0 0 12 13"><path d="M2 0v10.5M5.5 0v10.5M9 0v6M0 2h11M0 5.5h11M0 9h7" stroke="#f4f4f4" stroke-width="1.5" stroke-dasharray="1.3 .45"/><path d="M6.6 6.3l2.4 3.2 2.4-3.2M9 9.5V12.6" fill="none" stroke="#46607c" stroke-width="3.4"/><path d="M6.6 6.3l2.4 3.2 2.4-3.2M9 9.5V12.6" fill="none" stroke="#fff" stroke-width="1.6"/></svg>
<svg style="left:432px;top:84.2px" width="7" height="4" viewBox="0 0 7 4"><path d="M0 0H7L3.5 4Z" fill="#d8d8d8"/></svg>
<div class="sb" style="left:445px;width:18px;border-radius:2px 0 0 2px"></div>
<div class="sb" style="left:464px;width:12px;border-radius:0 2px 2px 0"></div>
<svg style="left:448px;top:80px" width="12" height="13" viewBox="0 0 12 13"><path d="M2 0v11M5.5 0v8M9 0v5M0 2h11M0 5.5h8M0 9h5" stroke="#8c8c8c" stroke-width="1.3" stroke-dasharray="1.3 .45"/><path d="M6.8 7.4h2.4a2.2 2.2 0 0 1 0 4.4H6.8" fill="none" stroke="#d0683c" stroke-width="1.7"/></svg>
<svg style="left:466.5px;top:84.2px" width="7" height="4" viewBox="0 0 7 4"><path d="M0 0H7L3.5 4Z" fill="#8a8a8a"/></svg>
<div class="sb" style="left:479px;width:32px"></div>
<svg style="left:482.5px;top:80px" width="12" height="13" viewBox="0 0 12 13"><path d="M1 0v13M11 0v13" stroke="#c8c8c8" stroke-width="1.8"/><rect x="1" y="3.5" width="10" height="5" fill="#c8c8c8"/><path d="M3.5 3.5v2.5M6 3.5v2.5M8.5 3.5v2.5" stroke="#505050" stroke-width="1"/></svg>
<svg style="left:499px;top:84.2px" width="7" height="4" viewBox="0 0 7 4"><path d="M0 0H7L3.5 4Z" fill="#c8c8c8"/></svg>
<div class="a" style="left:605.7px;top:79px;width:1px;height:14px;background:#555;"></div>
<div class="a" style="left:608.2px;top:79px;width:1px;height:14px;background:#555;"></div>
<div class="sb" style="left:613.7px;width:31.3px"></div>
<svg style="left:617px;top:79.5px" width="14" height="14" viewBox="0 0 14 14"><circle cx="7" cy="7" r="5.9" fill="none" stroke="#d0d0d0" stroke-width="1.5"/><path d="M3.3 9.8a5 5 0 0 0 7.4-6.4 5.5 5.5 0 0 1-7.4 6.4z" fill="#d0d0d0"/></svg>
<svg style="left:633px;top:84.2px" width="7" height="4" viewBox="0 0 7 4"><path d="M0 0H7L3.5 4Z" fill="#c8c8c8"/></svg>
<div class="sb" style="left:648px;width:27.7px"></div>
<div class="t " style="left:655.5px;top:79px;color:#dcdcdc;font-size:10.5px;font-weight:bold;letter-spacing:-0.3px">2D</div>
<div class="sb on" style="left:678px;width:28px"></div>
<svg style="left:687.5px;top:79.5px" width="9" height="13" viewBox="0 0 9 13"><path d="M4.5 0a4.3 4.3 0 0 1 2.4 7.9V9.6H2.1V7.9A4.3 4.3 0 0 1 4.5 0z" fill="#f4f4f4"/><rect x="2.3" y="10.3" width="4.4" height="1.2" fill="#f4f4f4"/><rect x="3" y="12" width="3" height="1" fill="#f4f4f4"/></svg>
<div class="sb" style="left:708.7px;width:28px"></div>
<svg style="left:717px;top:81px" width="12" height="11" viewBox="0 0 12 11"><path d="M0 3h2l2.5-2.5v8L2 6H0z" fill="#9a9a9a"/><path d="M5.8 1.8v5" stroke="#9a9a9a" stroke-width="1"/><path d="M7.5 5.5l3.5 4M11 5.5l-3.5 4" stroke="#9a9a9a" stroke-width="1.1"/></svg>
<div class="sb on" style="left:739px;width:19px;border-radius:2px 0 0 2px"></div>
<div class="sb on" style="left:759px;width:13px;border-radius:0 2px 2px 0"></div>
<svg style="left:742.5px;top:80px" width="13" height="13" viewBox="0 0 13 13"><path d="M0 5.5L5.5 3l5.5 2.5L5.5 8zM0 8l5.5 2.5L11 8M0 10.3l5.5 2.5 5.5-2.5" fill="#f0f0f0" stroke="#f0f0f0" stroke-width=".9" stroke-linejoin="round"/><path d="M9.7 0l.8 1.9 1.9.8-1.9.8-.8 1.9-.8-1.9L7 2.7l1.9-.8z" fill="#fff"/></svg>
<svg style="left:762px;top:84.2px" width="7" height="4" viewBox="0 0 7 4"><path d="M0 0H7L3.5 4Z" fill="#d8d8d8"/></svg>
<div class="sb on" style="left:774px;width:28px"></div>
<svg style="left:781px;top:80px" width="14" height="12" viewBox="0 0 14 12"><path d="M.6 6.2C3 2.2 10.5 2.2 13 6.2 10.5 10 3 10 .6 6.2z" fill="none" stroke="#f0f0f0" stroke-width="1.2"/><circle cx="6.8" cy="6.2" r="2" fill="#f0f0f0"/><path d="M2.2 11.4L11.6.8" stroke="#f0f0f0" stroke-width="1.4"/></svg>
<div class="sb" style="left:804.5px;width:31.3px"></div>
<svg style="left:808.5px;top:82px" width="12" height="9" viewBox="0 0 12 9"><rect x="0" y=".5" width="7.5" height="8" rx="1" fill="#b8b8b8"/><path d="M8.3 3.5L11.5.8v7.4L8.3 5.5z" fill="#b8b8b8"/></svg>
<svg style="left:823.8px;top:84.2px" width="7" height="4" viewBox="0 0 7 4"><path d="M0 0H7L3.5 4Z" fill="#c8c8c8"/></svg>
<div class="sb on" style="left:838px;width:19px;border-radius:2px 0 0 2px"></div>
<div class="sb on" style="left:858px;width:13px;border-radius:0 2px 2px 0"></div>
<svg style="left:841.5px;top:79.5px" width="13" height="13" viewBox="0 0 13 13"><circle cx="6.5" cy="6.5" r="5.6" fill="none" stroke="#fff" stroke-width="1.4"/><ellipse cx="6.5" cy="6.5" rx="2.6" ry="5.6" fill="none" stroke="#fff" stroke-width="1.1"/><path d="M1 6.5h11" stroke="#fff" stroke-width="1.1"/><circle cx="6.5" cy="1.2" r="1.3" fill="#fff"/><circle cx="1.6" cy="8.8" r="1.3" fill="#fff"/><circle cx="11.4" cy="8.8" r="1.3" fill="#fff"/></svg>
<svg style="left:861px;top:84.2px" width="7" height="4" viewBox="0 0 7 4"><path d="M0 0H7L3.5 4Z" fill="#d8d8d8"/></svg>
<svg style="left:254.3px;top:97px" width="619.3" height="442.4" viewBox="254.3 97 619.3 442.4">
<defs>
<linearGradient id="sky" x1="0" y1="97" x2="0" y2="349" gradientUnits="userSpaceOnUse">
<stop offset="0" stop-color="#7082ac"/><stop offset=".238" stop-color="#8298c0"/><stop offset=".472" stop-color="#9ab4dd"/><stop offset=".591" stop-color="#b3cbf0"/>
<stop offset=".663" stop-color="#c8e2fb"/><stop offset=".734" stop-color="#daf2fe"/><stop offset=".786" stop-color="#eefcff"/><stop offset=".835" stop-color="#fdffff"/><stop offset=".873" stop-color="#ffffff"/>
<stop offset=".897" stop-color="#dde6e4"/><stop offset=".917" stop-color="#b4bcb9"/><stop offset=".94" stop-color="#86857f"/><stop offset=".968" stop-color="#6b6660"/><stop offset="1" stop-color="#645d57"/></linearGradient>
<linearGradient id="skyR" x1="0" y1="97" x2="0" y2="349" gradientUnits="userSpaceOnUse"><stop offset="0" stop-color="#687b9f"/><stop offset="0.194" stop-color="#7688ae"/><stop offset="0.369" stop-color="#889bc6"/><stop offset="0.472" stop-color="#96aad4"/><stop offset="0.587" stop-color="#a5bbe2"/><stop offset="0.667" stop-color="#b6cef0"/><stop offset="0.726" stop-color="#c8e1fa"/><stop offset="0.774" stop-color="#daf0fd"/><stop offset="0.813" stop-color="#f0fcff"/><stop offset="0.853" stop-color="#ffffff"/><stop offset="0.873" stop-color="#ffffff"/><stop offset="0.897" stop-color="#dde6e4"/><stop offset="0.917" stop-color="#b4bcb9"/><stop offset="0.94" stop-color="#86857f"/><stop offset="0.968" stop-color="#6b6660"/><stop offset="1" stop-color="#645d57"/></linearGradient>
<linearGradient id="hm" x1="300" y1="0" x2="760" y2="0" gradientUnits="userSpaceOnUse"><stop offset="0" stop-color="#fff" stop-opacity="0"/><stop offset="1" stop-color="#fff" stop-opacity="1"/></linearGradient>
<mask id="mR" maskUnits="userSpaceOnUse" x="254" y="97" width="620" height="252"><rect x="254" y="97" width="620" height="252" fill="url(#hm)"/></mask>
<pattern id="stripe" width="4.2" height="4.2" patternUnits="userSpaceOnUse" patternTransform="rotate(40)"><rect width="2.3" height="4.2" fill="#111"/></pattern>
<pattern id="trib" width="8" height="7" patternUnits="userSpaceOnUse"><path d="M0 7L4 0l4 7z" fill="none" stroke="#222" stroke-width=".7"/></pattern>
<pattern id="triw" width="7" height="6.4" patternUnits="userSpaceOnUse"><path d="M0 6.4L3.5 0 7 6.4z" fill="none" stroke="#e8e8e8" stroke-width=".8"/></pattern>
</defs>
<rect x="254.3" y="97" width="619.3" height="252" fill="url(#sky)"/>
<rect x="254.3" y="97" width="619.3" height="252" fill="url(#skyR)" mask="url(#mR)"/>
<rect x="254.3" y="348" width="619.3" height="192" fill="#645d57"/>
<rect x="254.3" y="97" width="619.3" height="1" fill="#000" opacity=".22"/>
<path d="M254 411.2Q330 368 402 333.2" stroke="#a3aecb" stroke-width="1.2" opacity="0.85" fill="none"/>
<path d="M433.8 539.5L517 348" stroke="#a3aecb" stroke-width="1.2" opacity="0.85" fill="none"/>
<path d="M744 339Q810 372 873.6 408.5" stroke="#9fb0d6" stroke-width="1.2" opacity="0.85" fill="none"/>
<path d="M254 348.5L873.6 349.8" stroke="#8f8a85" stroke-width="1" opacity="0.1" fill="none"/>
<path d="M254 352L873.6 354.7" stroke="#8f8a85" stroke-width="1" opacity="0.12" fill="none"/>
<path d="M254 357L873.6 361.6" stroke="#8f8a85" stroke-width="1" opacity="0.15" fill="none"/>
<path d="M254 364L873.6 371.3" stroke="#8f8a85" stroke-width="1" opacity="0.2" fill="none"/>
<path d="M254 377L873.6 389.3" stroke="#8f8a85" stroke-width="1" opacity="0.28" fill="none"/>
<path d="M254 395.4L873.6 414.8" stroke="#8f8a85" stroke-width="1" opacity="0.39" fill="none"/>
<path d="M254 424.5L873.6 455" stroke="#8f8a85" stroke-width="1" opacity="0.4" fill="none"/>
<path d="M254 478.7L873.6 530.1" stroke="#8f8a85" stroke-width="1" opacity="0.4" fill="none"/>
<path d="M676.6 346.7L826.7 538.2" stroke="#8f8a85" stroke-width="1" opacity="0.36" fill="none"/>
<path d="M701 346.7L873.6 437.5" stroke="#8f8a85" stroke-width="1" opacity="0.32" fill="none"/>
<path d="M262 478.7L514 367.6" stroke="#8f8a85" stroke-width="1" opacity="0.32" fill="none"/>
<path d="M359.8 539.5L514 415.2" stroke="#8f8a85" stroke-width="1" opacity="0.32" fill="none"/>
<path d="M254 428L440 346" stroke="#8f8a85" stroke-width="1" opacity="0.25" fill="none"/>
<path d="M254 494.5C270 440 310 400 365 367.6Q395 352 425 345" stroke="#8f8a85" stroke-width="1" opacity="0.29" fill="none"/>
<path d="M254 380L330 346" stroke="#8f8a85" stroke-width="1" opacity="0.22" fill="none"/>
<path d="M760 346L873.6 392" stroke="#8f8a85" stroke-width="1" opacity="0.25" fill="none"/>
<path d="M620 520C700 505 800 510 873.6 530" stroke="#8f8a85" stroke-width="1" opacity="0.25" fill="none"/>
<path d="M565.7 97V540" stroke="#e8ecf4" stroke-width="1" opacity=".75"/><path d="M632.5 97V540" stroke="#c9d3e8" stroke-width="1" opacity=".35"/>
<path d="M521.5 247C518 262 513 281 509 297.5H512.5C516 282 520.5 264 524 250Z" fill="#eecbc9"/>
<path d="M524 258C521 270 517.5 285 515 297.5H519.5C521.5 286 524.5 272 527.5 262Z" fill="#eecbc9"/>
<path d="M607 246C611 262 613.5 280 613.5 298H638.5C633 280 625 262 616 248Z" fill="#eecbc9"/>
<path d="M612 254C618 268 622 284 624 298M616 252C624 266 630 282 634 297" stroke="#dcaaad" stroke-width="1.1" fill="none"/>
<path d="M502 340L522 340 519 358C512 356 506 350 502 340Z" fill="#eecbc9"/>
<path d="M608 341L648 344.5C647 352 642 358 636 362 638 368 636 374 631 379 627 372 622 370 616 372 612 366 609 356 608 341Z" fill="#f3ced4"/>
<path d="M640 346C636 354 630 360 622 364M628 346C626 352 622 358 616 362M631 378C634 372 632 366 626 364" stroke="#dba6b1" stroke-width="1.3" fill="none"/>
<path d="M514.3 193C520 193 526 194.5 531 196.5L527 221 520 221C518 212 515.5 202 514.3 193Z" fill="#d6a79e"/><path d="M517.5 199L526 202 522.5 216Z" fill="#fff"/>
<path d="M616.5 187.8C606 190 596 193.5 586.5 198L598 216 614 226C616.5 213 617.5 200 616.5 187.8Z" fill="#d9aba1"/><path d="M612.5 194L596.5 202.5 603 212 611 219C612.5 211 613 202 612.5 194Z" fill="#fff"/>
<path d="M515.2 504L556.5 503 553.7 540H522.8Z" fill="#fdeeee"/><path d="M572 506L616.2 508 609.2 540H578.3Z" fill="#fdeeee"/>
<path d="M549 505L547.5 540h6.2L556.5 503Z" fill="#f4dde0" opacity=".7"/><path d="M572 506L578.3 540h5L577 507Z" fill="#f4dde0" opacity=".7"/>
<path d="M510.8 452L509.6 481.6 510.8 500.6 522.8 508.8 527.2 496.8 531 508.1 544.3 506.9 558.1 503.1 564.4 498 565.1 474 566.3 490.5 570.8 505.6 591 514.4 594.7 501.8 599.8 515.7 616.2 510.7 623.8 500.6 624.4 477.9 622 450Z" fill="#3d3d3d"/>
<path d="M565.1 466V498" stroke="#262626" stroke-width="1"/>
<path d="M593.5 499.3L607.4 475.3 622.5 475.3 624.4 500.6 616.2 510.7 603.6 515.7 599.8 515.7 594.7 501.8Z" fill="url(#triw)"/>
<rect x="598.5" y="508" width="3.8" height="4.6" fill="#2a3c7a"/>
<ellipse cx="398" cy="313" rx="8.3" ry="15" fill="#1c1c1c"/><path d="M393 300a6 14 0 0 0 0 26" stroke="#3a3a3a" stroke-width="1.2" fill="none"/>
<path d="M751.3 293.5L764 295.5a5.5 5.5 0 0 1 5.6 5V325a5.5 5.5 0 0 1-5 5.5L752 332.5Z" fill="#1e1e1e"/>
<path d="M402.5 296.4C403 296.4 440 299 465 300.3L516 298.7 540 296 587 296 600 298 671 299.3C700 298 730 295 750.3 292.6 755 300 756.5 308 756.4 314.5 756 324 754 332 750.3 339L711.7 340 661 344 612 341.5 607.5 348 606 380 611 401 621 421 625 438 623.5 448C600 462 565 466.5 540 463.5 528 461.5 518 457 511 451L508.5 437.7 512 417.5 517.8 400.7 520.3 363.6 522.8 340.5 496 342.5 465 338.6 402.5 328.4Z" fill="#f9f9fa"/>
<path d="M402.5 328.4L465 338.6 496 342.5 522.5 340.5" stroke="#f1cfe0" stroke-width="1.6" fill="none"/>
<path d="M612 341.5L661 344 700 341" stroke="#f1d6e2" stroke-width="1.2" fill="none"/><path d="M682 335l8-1.5M658 340l12-1" stroke="#f3cfe0" stroke-width="1.6" fill="none" stroke-linecap="round"/>
<path d="M510.5 445C528 452 548 455.5 566 455.3 588 455 608 448 623.5 439" stroke="#dcdce2" stroke-width="1.3" fill="none"/>
<path d="M525.3 337C524 362 522 390 518.6 414" stroke="#f1d4e6" stroke-width="1.8" fill="none" opacity=".9"/>
<path d="M607 355c5-1 7 2 5 5-2 2-4 3-5 6M606 377c3 0 4 3 2 6M610 394c4 1 6 5 5 9M614 407c5 2 7 7 6 12M620 423c4 2 5 7 4 11" stroke="#1b1b1b" stroke-width="3.2" fill="none" stroke-linecap="round"/>
<path d="M520.5 356V378M516.5 396c-1.5 2-1.5 5 0 8M512.5 411c-2 3-2.5 6-1.5 10" stroke="#262626" stroke-width="2.4" fill="none" stroke-linecap="round"/>
<path d="M515.2 415.8L542.2 425.9 541.3 446.1 510.2 431Z" fill="url(#stripe)"/>
<path d="M599 385.5L604 385.5 610 401 619 421 621.5 446 603 441 593 420 587 402Z" fill="url(#trib)"/>
<path d="M390 309.2C376 308.8 361 309.6 347.8 313 351 315 359 315 366 315.3 361 317 356 319 355.5 321.3 368 322 380 321.2 390 319.5Z" fill="#fadcdb"/><circle cx="357" cy="320.5" r="1.3" fill="#f0b89a"/>
<path d="M769.6 308.4C790 308.6 815 310 838.7 312.8L838.5 314.5C830 315.5 820 316 812 316.5 816 318 820 320 819.4 322.7 805 322.5 785 321 769.6 318.6Z" fill="#fadcdb"/><circle cx="817.5" cy="321.8" r="1.3" fill="#f0b89a"/>
<path d="M527 216C519 240 520 275 531 297L548 297 562 290 578 297 592 297C604 280 610 250 601 214 590 203 540 201 527 216Z" fill="#eecbc9"/>
<path d="M531 297C527 288 525 276 526 262M592 297C598 288 602 276 603 262" stroke="#dcaaad" stroke-width="1.5" fill="none"/>
<path d="M537 291C542 302 550 307 557.5 307.5L570.6 307.5C576 306.5 580 301 584 293L577 287 562 292 547 287Z" fill="#f7f7f8"/>
<path d="M555 282L577 282 576 300 566 306 557 300Z" fill="#fbe3e2"/>
<path d="M543 281C547 287 552 291 557 292 553 288 549 284 546 279Z" fill="#2a2022"/><path d="M581 281C577 288 573 293 569 297 575 294 580 289 584 282Z" fill="#2a2022"/>
<path d="M535 244C534.5 262 541 276 552 283 557 286 560 287.5 563 287.5 567 287.5 572 285 577 281 586 274 591 262 590.5 244 580 236 545 236 535 244Z" fill="#fdf1ef"/>
<ellipse cx="541.5" cy="268.5" rx="5.5" ry="3" fill="#f9d3d8" opacity=".75"/><ellipse cx="584" cy="268" rx="5.5" ry="3" fill="#f9d3d8" opacity=".75"/>
<path d="M558.5 274.8C560.5 276 564 276 566 274.8" stroke="#d39a9a" stroke-width=".9" fill="none"/>
<path d="M528 218C538 196 588 194 601 214 607 234 606 254 599 268 597 258 594 250 590 245 587 241 584 243 581 247 578 243 575 241 572 240 571 246 569 250 567 254 564 248 561 243 557 240 553 243 549 246 546 248 543 245 539 246 536 250 534 256 534.5 262 536.5 268 528 258 524 238 528 220Z" fill="#eecbc9"/>
<path d="M557 240C556 228 558 216 563 208M572 240C574 230 574 218 571 208M546 248C543 236 545 222 551 212M590 245C592 234 590 222 584 212M536 250C533 240 534 228 538 218" stroke="#dcaaad" stroke-width="1" fill="none" opacity=".9"/>
<path d="M563 208C560 220 560 232 562 242M578 210C580 222 580 234 578 244" stroke="#f3dedb" stroke-width="1.3" fill="none"/>
<ellipse cx="544" cy="256" rx="8.4" ry="8.8" fill="#6aa6e6"/><ellipse cx="544" cy="259.5" rx="5.6" ry="4.6" fill="#c6e3fb"/><ellipse cx="544" cy="254.5" rx="3" ry="3.6" fill="#3d78c8"/><path d="M534 253.5C537 246.5 549 244.5 554.5 250.5" stroke="#4b3436" stroke-width="2.6" fill="none"/><circle cx="541.3" cy="252.8" r="1.6" fill="#fff"/>
<ellipse cx="581" cy="255.5" rx="8.4" ry="8.8" fill="#6aa6e6"/><ellipse cx="581" cy="259" rx="5.6" ry="4.6" fill="#c6e3fb"/><ellipse cx="581" cy="254" rx="3" ry="3.6" fill="#3d78c8"/><path d="M570.5 250.5C576 244.5 588 245 591.5 252.5" stroke="#4b3436" stroke-width="2.6" fill="none"/><circle cx="578.3" cy="252.3" r="1.6" fill="#fff"/>
<path d="M521.5 216.5C522 204 533 192 545 186.5 550 184.5 555 184 560 184.3 567 184.5 573 187 578 190 584 194 590 199 593.5 203.5L599.5 207 594 213C590 210 587 208.5 584 207.3 578 205 573 203.8 567.6 203.5 562 203.3 557 203.6 552.6 204.3 547 205.5 542 207 538.6 210.6 534 213.5 531 217 528.5 222Z" fill="#121212"/>
<path d="M550 185.5L556 204M554.5 184.6L560.5 203.6" stroke="#f4f4f4" stroke-width="1.7"/><path d="M558.5 184.3L564.5 203.3" stroke="#e9b6ba" stroke-width="1.2"/>
<path d="M599 207C606 218 610 232 611.5 246 612 252 612 256 611 260L616.5 259C617.5 250 616.5 240 614 230 611.5 222 608 214 603 208Z" fill="#151515"/><circle cx="613" cy="230.5" r="4" fill="#1d1d1d"/><path d="M609.5 252L616 250.5M609.5 255.5L616 254" stroke="#e8e8e8" stroke-width="1"/>
<path d="M518.5 208l4 5.5 5-5.5 3.5 2M522.5 213.5l2 9" stroke="#e27a34" stroke-width="2.6" fill="none" stroke-linejoin="round"/>
<path d="M590.5 206.5l6-1 2 7-6 1.5zM598 210.5l6.5-2 2.5 7-7 2zM597 218l6.5-1.5 1.5 5.5-6.5 1.5z" fill="none" stroke="#e27a34" stroke-width="2.5" stroke-linejoin="round"/>
<rect x="518.8" y="222.3" width="8.4" height="26.3" fill="#31c222"/><rect x="519.5" y="245" width="7" height="2.6" fill="#1c7a14"/><path d="M521 226v16M524 228v12" stroke="#1f9416" stroke-width=".8"/>
<path d="M535 291C541 302 549 308 557.5 308.3L570.6 308.3C576 307.5 580 302 584.5 294" stroke="#1b1b1b" stroke-width="3" fill="none"/>
<path d="M539 292C544 300 551 304.5 558 305L570 305C575 304 578 300 581 295" stroke="#f4f4f4" stroke-width="1" fill="none"/>
<ellipse cx="525.2" cy="312.3" rx="10.6" ry="20.2" fill="#272321" transform="rotate(3 525.2 312.3)"/><ellipse cx="530.5" cy="312" rx="2.6" ry="8" fill="#5a6373"/><ellipse cx="518.5" cy="313" rx="2" ry="13" fill="#8a8a8a" opacity=".45"/><path d="M517 300v22" stroke="#e8e8e8" stroke-width="1" stroke-dasharray="2 3" opacity=".7"/>
<ellipse cx="587.5" cy="312" rx="6" ry="21" fill="#272321"/><rect x="590" y="293" width="10.6" height="32" rx="3" fill="#1a1a1c"/><path d="M592 298v24" stroke="#dcdcdc" stroke-width="1.5" stroke-dasharray="3 4" opacity=".8"/><rect x="596" y="322" width="3.5" height="6" fill="#3a3a3a"/><path d="M598.5 297v22" stroke="#cfd3da" stroke-width="1.2" opacity=".6"/>
<path d="M554.7 308.5C554 318 551.5 327 549.5 334M568.75 308.5C568 318 566 326 564.5 333.4" stroke="#4a4a4a" stroke-width="1" fill="none"/><rect x="553.5" y="307" width="2.4" height="2.4" fill="#c8a838"/><rect x="567.5" y="307" width="2.4" height="2.4" fill="#c8a838"/>
<rect x="562.7" y="300.6" width="4.6" height="4.5" fill="#2a62f2"/><rect x="630.5" y="313.5" width="3.5" height="3.5" fill="#c3cdf2"/>
</svg>
<div class="a" style="left:256px;top:99.5px;width:32.7px;height:125.5px;background:#1d2027;border-radius:3px;border:1px solid #14161b"></div>
<div class="a" style="left:264.5px;top:104px;width:15px;height:1px;background:#6a6d73;"></div>
<div class="a" style="left:264.5px;top:107px;width:15px;height:1px;background:#6a6d73;"></div>
<div class="a" style="left:258px;top:114.5px;width:29px;height:17.2px;background:#46607c;border-radius:3px 3px 0 0"></div>
<div class="a" style="left:258px;top:133px;width:29px;height:16.5px;background:#545454;border-radius:0"></div>
<div class="a" style="left:258px;top:151px;width:29px;height:17px;background:#545454;border-radius:0"></div>
<div class="a" style="left:258px;top:169.5px;width:29px;height:16.5px;background:#545454;border-radius:0"></div>
<div class="a" style="left:258px;top:188px;width:29px;height:16.5px;background:#545454;border-radius:0"></div>
<div class="a" style="left:258px;top:206px;width:29px;height:17px;background:#545454;border-radius:0 0 3px 3px"></div>
<svg style="left:265.5px;top:116px" width="14" height="14" viewBox="0 0 14 14"><ellipse cx="7.3" cy="9.7" rx="3.5" ry="3.3" fill="#ebebeb"/><path d="M5.4 8L4.1 2.5M7 7.5L6.9 1.3M8.6 7.8L9.8 2M10 9L12.2 4.5M4.6 10.3L1.7 7.3" stroke="#ebebeb" stroke-width="1.75" stroke-linecap="round" fill="none"/></svg>
<svg style="left:265.5px;top:134.5px" width="14" height="14" viewBox="0 0 14 14"><path d="M7 1v12M1 7h12" stroke="#b9b9b9" stroke-width="1.1"/><path d="M5 3l2-2.2L9 3M5 11l2 2.2L9 11M3 5L.8 7 3 9M11 5l2.2 2L11 9" fill="none" stroke="#b9b9b9" stroke-width="1.1"/></svg>
<svg style="left:265.5px;top:152.5px" width="14" height="14" viewBox="0 0 14 14"><path d="M2.5 9.5A5 5 0 0 1 9 2.2M11.5 4.5A5 5 0 0 1 5 11.8" fill="none" stroke="#b9b9b9" stroke-width="1.2"/><path d="M7.2 0l2.6 2.3-2.8 1.9M6.8 14l-2.6-2.3 2.8-1.9" fill="none" stroke="#b9b9b9" stroke-width="1.1"/></svg>
<svg style="left:266px;top:171px" width="13" height="13" viewBox="0 0 13 13"><rect x=".6" y=".6" width="11.8" height="11.8" fill="none" stroke="#b9b9b9" stroke-width="1.1"/><rect x="1.8" y="8.2" width="3" height="3" fill="#b9b9b9"/><path d="M5.5 7.5l4-4M6.5 3.2h3.3v3.3" fill="none" stroke="#b9b9b9" stroke-width="1.1"/></svg>
<svg style="left:266px;top:189.5px" width="13" height="13" viewBox="0 0 13 13"><rect x="1.5" y="1.5" width="10" height="10" fill="none" stroke="#b9b9b9" stroke-width="1"/><rect x="0" y="0" width="3" height="3" fill="#b9b9b9"/><rect x="10" y="0" width="3" height="3" fill="#b9b9b9"/><rect x="0" y="10" width="3" height="3" fill="#b9b9b9"/><rect x="10" y="10" width="3" height="3" fill="#b9b9b9"/></svg>
<svg style="left:265.5px;top:207.5px" width="14" height="14" viewBox="0 0 14 14"><circle cx="7" cy="7" r="4.6" fill="none" stroke="#b9b9b9" stroke-width="1"/><path d="M7 3v8M3 7h8" stroke="#b9b9b9" stroke-width="1"/><path d="M5.8 4.2L7 3l1.2 1.2M5.8 9.8L7 11l1.2-1.2M4.2 5.8L3 7l1.2 1.2M9.8 5.8L11 7 9.8 8.2" fill="none" stroke="#b9b9b9" stroke-width=".9"/><path d="M.5 3V.5H3M11 .5h2.5V3M.5 11v2.5H3" fill="none" stroke="#b9b9b9" stroke-width="1" stroke-dasharray="1.5 1"/></svg>
<div class="a" style="left:780px;top:105px;width:14px;height:1px;background:#6b7590;"></div>
<div class="a" style="left:780px;top:107.3px;width:14px;height:1px;background:#6b7590;"></div>
<svg style="left:790px;top:105px" width="75" height="90" viewBox="790 105 75 90">
<defs><linearGradient id="gz1" x1="0" x2="1"><stop offset="0" stop-color="#a8a8a8"/><stop offset=".5" stop-color="#ececec"/><stop offset="1" stop-color="#bdbdbd"/></linearGradient>
<linearGradient id="gz2" x1="0" x2="0" y1="0" y2="1"><stop offset="0" stop-color="#bdbdbd"/><stop offset=".5" stop-color="#ececec"/><stop offset="1" stop-color="#a8a8a8"/></linearGradient></defs>
<path d="M819.8 118.5a5.2 1.5 0 0 1 10.4 0L825 134.5z" fill="#9fe74f"/><ellipse cx="825" cy="118.5" rx="5.2" ry="1.6" fill="#8fd63f"/>
<path d="M802.5 137.5a1.5 5 0 0 0 0 10L818 142.5z" fill="#d9573f"/>
<path d="M851 137.5a1.5 5 0 0 1 0 10L833 142.5z" fill="url(#gz2)"/>
<path d="M819.8 167a5.2 1.5 0 0 0 10.4 0L825 151z" fill="url(#gz1)"/>
<rect x="818.3" y="136" width="13" height="13" fill="#f6f6f6"/>
</svg>
<div class="t " style="left:821.5px;top:104px;color:#fff;font-weight:bold;font-size:11px">y</div>
<div class="t " style="left:795px;top:135px;color:#fff;font-weight:bold;font-size:11px">x</div>
<svg style="left:850.5px;top:111.5px" width="7" height="8" viewBox="0 0 7 8"><path d="M3 3.5V2a1.7 1.7 0 0 1 3.4 0" fill="none" stroke="#e8e8f0" stroke-width="1"/><rect x="0" y="3.5" width="6" height="4.3" fill="#e8e8f0"/></svg>
<svg style="left:803.5px;top:182.5px" width="9" height="9" viewBox="0 0 9 9"><path d="M9 .5L.8 4.5 9 8.5M.8 4.5H9" fill="none" stroke="#ccd4e6" stroke-width=".9"/></svg>
<div class="t " style="left:815px;top:180px;color:#cdd5e8;font-size:11px">Persp</div>
<div class="a" style="left:254.3px;top:539.4px;width:619.3px;height:1.6px;background:#161616;"></div>
<div class="a" style="left:254.3px;top:541px;width:619.3px;height:272px;background:#383838;"></div>
<div class="a" style="left:254.3px;top:541px;width:619.3px;height:16px;background:#282828;"></div>
<div class="tab" style="left:254.5px;top:541px;width:75.5px;height:16px"></div>
<svg style="left:262px;top:544.5px" width="10" height="10" viewBox="0 0 10 10"><rect x="0" y="0" width="10" height="10" rx="1.2" fill="#cfcfcf"/><path d="M1.8 2.5h4M1.8 4.8h4M1.8 7.1h4" stroke="#8a8a8a" stroke-width="1.1"/><rect x="6.8" y="3.3" width="3.2" height="3" fill="#8a8a8a"/></svg>
<div class="t " style="left:275px;top:543px;color:#d2d2d2">Console</div>
<div class="t " style="left:337px;top:543px;color:#d2d2d2">Test Runner</div>
<svg style="left:860.5px;top:544.5px" width="3" height="9" viewBox="0 0 3 9"><circle cx="1.5" cy="1.1" r="1.4" fill="#cdcdcd"/><circle cx="1.5" cy="4.5" r="1.4" fill="#cdcdcd"/><circle cx="1.5" cy="7.9" r="1.4" fill="#cdcdcd"/></svg>
<div class="a" style="left:254.3px;top:557px;width:619.3px;height:18.3px;background:#3c3c3c;border-bottom:1px solid #232323"></div>
<div class="a" style="left:254.3px;top:557px;width:209.2px;height:18px;background:#434343;"></div>
<div class="t " style="left:257.5px;top:559px;color:#d2d2d2">Clear</div>
<svg style="left:293px;top:564.25px" width="6" height="3.5" viewBox="0 0 6 3.5"><path d="M0 0H6L3 3.5Z" fill="#c8c8c8"/></svg>
<div class="t " style="left:307.5px;top:559px;color:#d2d2d2">Collapse</div>
<div class="t " style="left:359px;top:559px;color:#d2d2d2;letter-spacing:-0.25px">Error Pause</div>
<div class="t " style="left:422.5px;top:559px;color:#d2d2d2">Editor</div>
<svg style="left:453px;top:564.25px" width="6" height="3.5" viewBox="0 0 6 3.5"><path d="M0 0H6L3 3.5Z" fill="#c8c8c8"/></svg>
<div class="a" style="left:288.3px;top:557.5px;width:1px;height:17px;background:#2d2d2d;"></div>
<div class="a" style="left:303px;top:557.5px;width:1px;height:17px;background:#2d2d2d;"></div>
<div class="a" style="left:354px;top:557.5px;width:1px;height:17px;background:#2d2d2d;"></div>
<div class="a" style="left:419px;top:557.5px;width:1px;height:17px;background:#2d2d2d;"></div>
<div class="a" style="left:463.5px;top:557.5px;width:1px;height:17px;background:#2d2d2d;"></div>
<div class="a" style="left:784px;top:557.5px;width:1px;height:17px;background:#2d2d2d;"></div>
<div class="a" style="left:813.5px;top:557.5px;width:1px;height:17px;background:#2d2d2d;"></div>
<div class="a" style="left:842.5px;top:557.5px;width:1px;height:17px;background:#2d2d2d;"></div>
<div class="f" style="left:521px;top:560px;width:260.5px;height:12.5px"></div>
<svg style="left:525px;top:563px" width="7" height="7" viewBox="0 0 7 7"><circle cx="2.7" cy="2.7" r="1.9" fill="none" stroke="#b4b4b4" stroke-width="1.2"/><path d="M4.2 4.2l2.3 2.3" stroke="#b4b4b4" stroke-width="1.3"/></svg>
<div class="a" style="left:785px;top:558px;width:28px;height:16px;background:#464646;"></div>
<div class="a" style="left:814.5px;top:558px;width:28px;height:16px;background:#464646;"></div>
<div class="a" style="left:843.5px;top:558px;width:29px;height:16px;background:#464646;"></div>
<svg style="left:790px;top:560.5px" width="11" height="12" viewBox="0 0 11 12"><path d="M1.5 0h8A1.5 1.5 0 0 1 11 1.5v6A1.5 1.5 0 0 1 9.5 9H6l-2.5 3V9h-2A1.5 1.5 0 0 1 0 7.5v-6A1.5 1.5 0 0 1 1.5 0z" fill="#8c8c8c"/><rect x="4.8" y="1.7" width="1.5" height="4" fill="#3c3c3c"/><rect x="4.8" y="6.4" width="1.5" height="1.4" fill="#3c3c3c"/></svg>
<div class="t " style="left:803.5px;top:559px;color:#d2d2d2">0</div>
<svg style="left:819px;top:560.5px" width="12" height="11" viewBox="0 0 12 11"><path d="M6 0l6 11H0z" fill="#8c8c8c"/><rect x="5.3" y="3.8" width="1.4" height="3.6" fill="#3c3c3c"/><rect x="5.3" y="8.2" width="1.4" height="1.4" fill="#3c3c3c"/></svg>
<div class="t " style="left:833px;top:559px;color:#d2d2d2">0</div>
<svg style="left:848px;top:560px" width="12" height="12" viewBox="0 0 12 12"><path d="M3.6 0h4.8L12 3.6v4.8L8.4 12H3.6L0 8.4V3.6z" fill="#e0e0e0"/><rect x="5.2" y="2.5" width="1.6" height="4.5" fill="#3c3c3c"/><rect x="5.2" y="8" width="1.6" height="1.6" fill="#3c3c3c"/></svg>
<div class="a" style="left:254.3px;top:740.5px;width:619.3px;height:1px;background:#2a2a2a;"></div>
<div class="t " style="left:862.5px;top:559px;color:#d2d2d2">0</div>
<div class="a" style="left:873.6px;top:58px;width:1.6px;height:755px;background:#1c1c1c;"></div>
<div class="a" style="left:875.2px;top:58px;width:404.8px;height:755px;background:#383838;"></div>
<div class="a" style="left:875.2px;top:58px;width:404.8px;height:17px;background:#282828;"></div>
<div class="tab" style="left:876px;top:58px;width:80px;height:17px;border-top:2px solid #3a72b0"></div>
<svg style="left:882px;top:61.5px" width="10" height="10" viewBox="0 0 10 10"><circle cx="5" cy="5" r="5" fill="#d8d8d8"/><rect x="4.2" y="4.2" width="1.6" height="3.6" fill="#3c3c3c"/><rect x="4.2" y="2" width="1.6" height="1.5" fill="#3c3c3c"/></svg>
<div class="t " style="left:895.5px;top:60px;color:#d2d2d2">Inspector</div>
<svg style="left:1248px;top:61px" width="9" height="10" viewBox="0 0 9 10"><path d="M2.2 2.9a2.25 2.25 0 0 1 4.5 .2V5" fill="none" stroke="#cdcdcd" stroke-width="1.5"/><rect x=".9" y="5.1" width="7.2" height="4" rx="1.3" fill="none" stroke="#cdcdcd" stroke-width="1.5"/></svg>
<svg style="left:1266px;top:62px" width="3" height="9" viewBox="0 0 3 9"><circle cx="1.5" cy="1.1" r="1.4" fill="#cdcdcd"/><circle cx="1.5" cy="4.5" r="1.4" fill="#cdcdcd"/><circle cx="1.5" cy="7.9" r="1.4" fill="#cdcdcd"/></svg>
<div class="a" style="left:875.2px;top:75px;width:393.5px;height:17.3px;background:#3e3e3e;border-bottom:1px solid #303030"></div>
<svg style="left:879.5px;top:81px" width="8" height="6" viewBox="0 0 8 6"><path d="M0 0H8L4 6Z" fill="#757575"/></svg>
<svg style="left:893.5px;top:77.5px" width="11" height="13" viewBox="0 0 11 13"><path d="M1 0h6.5L11 3.5V12a1 1 0 0 1-1 1H1a1 1 0 0 1-1-1V1a1 1 0 0 1 1-1z" fill="#f4f4f0"/><path d="M4.2 4v6M6.7 4v6M2.5 5.8h6M2.5 8.2h6" stroke="#4c8a4c" stroke-width="1"/></svg>
<div class="a" style="left:910px;top:78px;width:11.5px;height:11.5px;background:#222;border:1px solid #2f2f2f;border-radius:2px"></div>
<svg style="left:912px;top:80.5px" width="8" height="7" viewBox="0 0 8 7"><path d="M.7 3.5l2.3 2.3L7.3.8" fill="none" stroke="#f0f0f0" stroke-width="1.4"/></svg>
<div class="t b" style="left:927.7px;top:77px;color:#e4e4e4">AI Avatar (Script)</div>
<svg style="left:1217px;top:78.7px" width="10" height="10" viewBox="0 0 10 10"><circle cx="5" cy="5" r="5" fill="#cfcfcf"/><path d="M3.4 3.9a1.7 1.7 0 1 1 2.4 1.5c-.6.3-.8.6-.8 1.2" fill="none" stroke="#3e3e3e" stroke-width="1.2"/><rect x="4.3" y="7.3" width="1.4" height="1.3" fill="#3e3e3e"/></svg>
<svg style="left:1235px;top:79.5px" width="10" height="9" viewBox="0 0 10 9"><path d="M0 2.3h10M0 6.7h10" stroke="#d0d0d0" stroke-width="1.5"/><rect x="5.8" y="0" width="1.9" height="4.6" fill="#d0d0d0"/><rect x="2.3" y="4.4" width="1.9" height="4.6" fill="#d0d0d0"/></svg>
<svg style="left:1256px;top:79.2px" width="3" height="9" viewBox="0 0 3 9"><circle cx="1.5" cy="1.1" r="1.4" fill="#cdcdcd"/><circle cx="1.5" cy="4.5" r="1.4" fill="#cdcdcd"/><circle cx="1.5" cy="7.9" r="1.4" fill="#cdcdcd"/></svg>
<div class="a" style="left:1268.7px;top:75px;width:11.3px;height:738px;background:#353535;border-left:1px solid #2d2d2d"></div>
<svg style="left:1271px;top:80px" width="7" height="4" viewBox="0 0 7 4"><path d="M0 4h7L3.5 0z" fill="#d0d0d0"/></svg>
<div class="a" style="left:1270.5px;top:161.5px;width:9px;height:458.5px;background:#5f5f5f;border-radius:4.5px"></div>
<svg style="left:1271px;top:804px" width="7" height="4" viewBox="0 0 7 4"><path d="M0 0h7L3.5 4z" fill="#d0d0d0"/></svg>
<div class="t " style="left:891.8px;top:97px;color:#7c7c7c">Script</div>
<div class="f" style="left:1040.4px;top:96px;width:224.2px;height:14.6px;background:#333;border-color:#2c2c2c"></div>
<svg style="left:1043.6px;top:98.5px" width="8" height="10" viewBox="0 0 9 11"><path d="M.8 0h5.4L9 2.8V10.2a.8.8 0 0 1-.8.8H.8A.8.8 0 0 1 0 10.2V.8A.8.8 0 0 1 .8 0z" fill="#8e8e8e"/><path d="M3.4 3.5v5M5.6 3.5v5M2 5h5M2 7h5" stroke="#5d8f5d" stroke-width=".8"/></svg>
<div class="t " style="left:1055px;top:97px;color:#808080">AIAvatar</div>
<svg style="left:1251.5px;top:99px" width="9" height="9" viewBox="0 0 9 9"><circle cx="4.5" cy="4.5" r="3.8" fill="none" stroke="#7a7a7a" stroke-width="1"/><circle cx="4.5" cy="4.5" r="1.5" fill="#7a7a7a"/></svg>
<div class="t b" style="left:891.8px;top:123px;color:#dcdcdc">Avatar lifecycle settings</div>
<div class="t " style="left:891.8px;top:138px;color:#c8c8c8">Conversation Timeout</div>
<div class="f" style="left:1040.4px;top:138px;width:224.2px;height:15px"></div>
<div class="t " style="left:1043.4px;top:138px;color:#d2d2d2">15</div>
<div class="t " style="left:891.8px;top:156px;color:#c8c8c8">Idle Timeout</div>
<div class="f" style="left:1040.4px;top:155px;width:224.2px;height:15px"></div>
<div class="t " style="left:1043.4px;top:156px;color:#d2d2d2">30</div>
<div class="t b" style="left:891.8px;top:182px;color:#dcdcdc">SpeechListener settings</div>
<div class="t" style="left:891.8px;top:198px;width:146.5px;overflow:hidden;color:#c8c8c8">Voice Recognition Threshold DB</div>
<div class="f" style="left:1040.4px;top:197px;width:224.2px;height:15px"></div>
<div class="t " style="left:1043.4px;top:198px;color:#d2d2d2">-50</div>
<div class="t" style="left:891.8px;top:215px;width:146.5px;overflow:hidden;color:#c8c8c8">Voice Recognition Raised Threshold DB</div>
<div class="f" style="left:1040.4px;top:214px;width:224.2px;height:15px"></div>
<div class="t " style="left:1043.4px;top:215px;color:#d2d2d2">-15</div>
<div class="t" style="left:891.8px;top:233px;width:146.5px;overflow:hidden;color:#c8c8c8">Conversation Silence Duration Threshold</div>
<div class="f" style="left:1040.4px;top:232px;width:224.2px;height:15px"></div>
<div class="t " style="left:1043.4px;top:232px;color:#d2d2d2">0.4</div>
<div class="t" style="left:891.8px;top:250px;width:146.5px;overflow:hidden;color:#c8c8c8">Conversation Min Recording Duration</div>
<div class="f" style="left:1040.4px;top:249px;width:224.2px;height:15px"></div>
<div class="t " style="left:1043.4px;top:250px;color:#d2d2d2">0.3</div>
<div class="t" style="left:891.8px;top:267px;width:146.5px;overflow:hidden;color:#c8c8c8">Conversation Max Recording Duration</div>
<div class="f" style="left:1040.4px;top:267px;width:224.2px;height:15px"></div>
<div class="t " style="left:1043.4px;top:267px;color:#d2d2d2">10</div>
<div class="t" style="left:891.8px;top:285px;width:146.5px;overflow:hidden;color:#c8c8c8">Idle Silence Duration Threshold</div>
<div class="f" style="left:1040.4px;top:284px;width:224.2px;height:15px"></div>
<div class="t " style="left:1043.4px;top:285px;color:#d2d2d2">0.3</div>
<div class="t" style="left:891.8px;top:302px;width:146.5px;overflow:hidden;color:#c8c8c8">Idle Min Recording Duration</div>
<div class="f" style="left:1040.4px;top:302px;width:224.2px;height:15px"></div>
<div class="t " style="left:1043.4px;top:302px;color:#d2d2d2">0.2</div>
<div class="t" style="left:891.8px;top:320px;width:146.5px;overflow:hidden;color:#c8c8c8">Idle Max Recording Duration</div>
<div class="f" style="left:1040.4px;top:319px;width:224.2px;height:15px"></div>
<div class="t " style="left:1043.4px;top:320px;color:#d2d2d2">3</div>
<div class="t " style="left:891.8px;top:337px;color:#c8c8c8">Microphone Mute By</div>
<div class="dd" style="left:1040.4px;top:337px;width:224.2px;height:15px"></div>
<div class="t " style="left:1043.9px;top:337px;color:#e4e4e4">Mute</div>
<svg style="left:1252.6000000000001px;top:342.3px" width="7" height="4" viewBox="0 0 7 4"><path d="M0 0H7L3.5 4Z" fill="#d8d8d8"/></svg>
<div class="t b" style="left:891.8px;top:364px;color:#dcdcdc">WakeWord settings</div>
<svg style="left:889.5px;top:384px" width="8" height="6" viewBox="0 0 8 6"><path d="M0 0H8L4 6Z" fill="#757575"/></svg>
<div class="t b" style="left:902px;top:380px;color:#dcdcdc">Wake Words</div>
<div class="f" style="left:1220px;top:379px;width:43.3px;height:15px"></div>
<div class="t " style="left:1223px;top:380px;color:#d2d2d2">1</div>
<div class="a" style="left:875px;top:379px;width:2px;height:16px;background:#4494e4;"></div>
<div class="a" style="left:875px;top:398px;width:2px;height:71px;background:#4494e4;"></div>
<div class="a" style="left:875px;top:580px;width:2px;height:16px;background:#4494e4;"></div>
<div class="a" style="left:875px;top:767px;width:2px;height:35px;background:#4494e4;"></div>
<div class="a" style="left:888.6px;top:395px;width:375.4px;height:163px;background:#3a5d8c;border:1px solid #232323;border-radius:3px 3px 0 3px"></div>
<div class="a" style="left:891.8px;top:403.5px;width:8.5px;height:1px;background:#5d7aa0;"></div>
<div class="a" style="left:891.8px;top:406px;width:8.5px;height:1px;background:#5d7aa0;"></div>
<svg style="left:904.8px;top:402.8px" width="8" height="6" viewBox="0 0 8 6"><path d="M0 0H8L4 6Z" fill="#8192ad"/></svg>
<div class="t b" style="left:917px;top:398px;color:#8db6ff">Hello</div>
<div class="t b" style="left:930.2px;top:417px;color:#e0e0e0">Text</div>
<div class="f" style="left:1040.4px;top:416px;width:219.4px;height:15px"></div>
<div class="t b" style="left:1043.4px;top:417px;color:#f0f0f0">Hello</div>
<div class="t b" style="left:930.2px;top:434px;color:#e0e0e0">Prefix Allowance</div>
<div class="f" style="left:1040.4px;top:434px;width:219.4px;height:15px"></div>
<div class="t b" style="left:1043.4px;top:434px;color:#f0f0f0">4</div>
<div class="t b" style="left:930.2px;top:452px;color:#e0e0e0">Suffix Allowance</div>
<div class="f" style="left:1040.4px;top:451px;width:219.4px;height:15px"></div>
<div class="t b" style="left:1043.4px;top:452px;color:#f0f0f0">4</div>
<div class="t " style="left:930.2px;top:469px;color:#d0d0d0">Intent</div>
<div class="f" style="left:1040.4px;top:469px;width:219.4px;height:15px"></div>
<div class="t " style="left:930.2px;top:487px;color:#d0d0d0">Intent Priority</div>
<div class="dd" style="left:1040.4px;top:487px;width:219.4px;height:15px"></div>
<div class="t " style="left:1043.9px;top:487px;color:#e4e4e4">Lowest</div>
<svg style="left:1247.8000000000002px;top:492.3px" width="7" height="4" viewBox="0 0 7 4"><path d="M0 0H7L3.5 4Z" fill="#d8d8d8"/></svg>
<div class="t " style="left:930.2px;top:505px;color:#d0d0d0">Request Type</div>
<div class="dd" style="left:1040.4px;top:505px;width:219.4px;height:15px"></div>
<div class="t " style="left:1043.9px;top:505px;color:#e4e4e4">None</div>
<svg style="left:1247.8000000000002px;top:510.29999999999995px" width="7" height="4" viewBox="0 0 7 4"><path d="M0 0H7L3.5 4Z" fill="#d8d8d8"/></svg>
<div class="t" style="left:930.2px;top:523.5px;width:108.5px;overflow:hidden;color:#d0d0d0">Inline Request Minimum Length</div>
<div class="f" style="left:1040.4px;top:523px;width:219.4px;height:15px"></div>
<div class="t " style="left:1042.9px;top:523px;color:#d2d2d2">0</div>
<div class="t " style="left:930.2px;top:539px;color:#d0d0d0">Skip Prompt</div>
<div class="f" style="left:1040.4px;top:540.3px;width:11.6px;height:11.3px;border-radius:2px;background:#303030"></div>
<svg style="left:910px;top:405px" width="290" height="70" viewBox="910 405 290 70"><rect x="920.3" y="413.5" width="267.7" height="51.5" rx="26.5" ry="25" fill="none" stroke="#e9462b" stroke-width="4.6"/></svg>
<div class="a" style="left:1204.7px;top:557px;width:46px;height:20.6px;background:#464646;border:1px solid #242424;border-top:none;border-radius:0 0 3px 3px"></div>
<svg style="left:1213.5px;top:564.5px" width="8" height="8" viewBox="0 0 8 8"><path d="M4 0v8M0 4h8" stroke="#e0e0e0" stroke-width="1.5"/></svg>
<div class="a" style="left:1235px;top:568px;width:5px;height:1.5px;background:#d0d0d0;"></div>
<svg style="left:890.75px;top:583px" width="5.5" height="8" viewBox="0 0 5.5 8"><path d="M0 0V8L5.5 4Z" fill="#757575"/></svg>
<div class="t b" style="left:902px;top:580px;color:#dcdcdc">Cancel Words</div>
<div class="f" style="left:1220px;top:579px;width:43.3px;height:15px"></div>
<div class="t " style="left:1223px;top:580px;color:#d2d2d2">1</div>
<svg style="left:890.75px;top:600.4px" width="5.5" height="8" viewBox="0 0 5.5 8"><path d="M0 0V8L5.5 4Z" fill="#757575"/></svg>
<div class="t " style="left:902px;top:597px;color:#c8c8c8">Ignore Words</div>
<div class="f" style="left:1220px;top:597px;width:43.3px;height:15px"></div>
<div class="t " style="left:1223px;top:597px;color:#d2d2d2">4</div>
<div class="t " style="left:891.8px;top:615px;color:#c8c8c8">Wake Length</div>
<div class="f" style="left:1040.4px;top:614px;width:224.2px;height:15px"></div>
<div class="t " style="left:1043.4px;top:615px;color:#d2d2d2">0</div>
<div class="t b" style="left:891.8px;top:641px;color:#dcdcdc">ChatdollKit components</div>
<div class="t " style="left:891.8px;top:656px;color:#c8c8c8">Model Controller</div>
<div class="f" style="left:1040.4px;top:656px;width:224.2px;height:15px;overflow:hidden"></div>
<svg style="left:1043.6px;top:658.4px" width="8" height="10" viewBox="0 0 9 11"><path d="M.8 0h5.4L9 2.8V10.2a.8.8 0 0 1-.8.8H.8A.8.8 0 0 1 0 10.2V.8A.8.8 0 0 1 .8 0z" fill="#e2e2e2"/><path d="M3.4 3.5v5M5.6 3.5v5M2 5h5M2 7h5" stroke="#5d8f5d" stroke-width=".8"/></svg>
<div class="t" style="left:1055px;top:656px;width:193.5px;overflow:hidden;color:#d2d2d2">AIAvatarVRM (Model Controller)</div>
<div class="a" style="left:1248.6px;top:657px;width:15px;height:13px;background:#373737;border-radius:0 2px 2px 0"></div>
<svg style="left:1251.5px;top:658.9px" width="9" height="9" viewBox="0 0 9 9"><circle cx="4.5" cy="4.5" r="3.8" fill="none" stroke="#c8c8c8" stroke-width="1"/><circle cx="4.5" cy="4.5" r="1.6" fill="#c8c8c8"/></svg>
<div class="t " style="left:891.8px;top:674px;color:#c8c8c8">Dialog Processor</div>
<div class="f" style="left:1040.4px;top:673px;width:224.2px;height:15px;overflow:hidden"></div>
<svg style="left:1043.6px;top:675.9px" width="8" height="10" viewBox="0 0 9 11"><path d="M.8 0h5.4L9 2.8V10.2a.8.8 0 0 1-.8.8H.8A.8.8 0 0 1 0 10.2V.8A.8.8 0 0 1 .8 0z" fill="#e2e2e2"/><path d="M3.4 3.5v5M5.6 3.5v5M2 5h5M2 7h5" stroke="#5d8f5d" stroke-width=".8"/></svg>
<div class="t" style="left:1055px;top:674px;width:193.5px;overflow:hidden;color:#d2d2d2">AIAvatarVRM (Dialog Processor)</div>
<div class="a" style="left:1248.6px;top:674px;width:15px;height:13px;background:#373737;border-radius:0 2px 2px 0"></div>
<svg style="left:1251.5px;top:676.4px" width="9" height="9" viewBox="0 0 9 9"><circle cx="4.5" cy="4.5" r="3.8" fill="none" stroke="#c8c8c8" stroke-width="1"/><circle cx="4.5" cy="4.5" r="1.6" fill="#c8c8c8"/></svg>
<div class="t " style="left:891.8px;top:692px;color:#c8c8c8">Microphone Manager</div>
<div class="f" style="left:1040.4px;top:691px;width:224.2px;height:15px;overflow:hidden"></div>
<svg style="left:1043.6px;top:693.5px" width="8" height="10" viewBox="0 0 9 11"><path d="M.8 0h5.4L9 2.8V10.2a.8.8 0 0 1-.8.8H.8A.8.8 0 0 1 0 10.2V.8A.8.8 0 0 1 .8 0z" fill="#e2e2e2"/><path d="M3.4 3.5v5M5.6 3.5v5M2 5h5M2 7h5" stroke="#5d8f5d" stroke-width=".8"/></svg>
<div class="t" style="left:1055px;top:692px;width:193.5px;overflow:hidden;color:#d2d2d2">AIAvatarVRM (Microphone Manager)</div>
<div class="a" style="left:1248.6px;top:692px;width:15px;height:13px;background:#373737;border-radius:0 2px 2px 0"></div>
<svg style="left:1251.5px;top:694px" width="9" height="9" viewBox="0 0 9 9"><circle cx="4.5" cy="4.5" r="3.8" fill="none" stroke="#c8c8c8" stroke-width="1"/><circle cx="4.5" cy="4.5" r="1.6" fill="#c8c8c8"/></svg>
<div class="t " style="left:891.8px;top:709px;color:#c8c8c8">User Message Window</div>
<div class="f" style="left:1040.4px;top:708px;width:224.2px;height:15px;overflow:hidden"></div>
<svg style="left:1043.6px;top:711px" width="8" height="10" viewBox="0 0 9 11"><path d="M.8 0h5.4L9 2.8V10.2a.8.8 0 0 1-.8.8H.8A.8.8 0 0 1 0 10.2V.8A.8.8 0 0 1 .8 0z" fill="#e2e2e2"/><path d="M3.4 3.5v5M5.6 3.5v5M2 5h5M2 7h5" stroke="#5d8f5d" stroke-width=".8"/></svg>
<div class="t" style="left:1055px;top:709px;width:193.5px;overflow:hidden;color:#d2d2d2">UserMessageWindow (Simple Message Window)</div>
<div class="a" style="left:1248.6px;top:709px;width:15px;height:13px;background:#373737;border-radius:0 2px 2px 0"></div>
<svg style="left:1251.5px;top:711.5px" width="9" height="9" viewBox="0 0 9 9"><circle cx="4.5" cy="4.5" r="3.8" fill="none" stroke="#c8c8c8" stroke-width="1"/><circle cx="4.5" cy="4.5" r="1.6" fill="#c8c8c8"/></svg>
<div class="t " style="left:891.8px;top:726px;color:#c8c8c8">Character Message Window</div>
<div class="f" style="left:1040.4px;top:726px;width:224.2px;height:15px;overflow:hidden"></div>
<svg style="left:1043.6px;top:728.2px" width="8" height="10" viewBox="0 0 9 11"><path d="M.8 0h5.4L9 2.8V10.2a.8.8 0 0 1-.8.8H.8A.8.8 0 0 1 0 10.2V.8A.8.8 0 0 1 .8 0z" fill="#e2e2e2"/><path d="M3.4 3.5v5M5.6 3.5v5M2 5h5M2 7h5" stroke="#5d8f5d" stroke-width=".8"/></svg>
<div class="t" style="left:1055px;top:726px;width:193.5px;overflow:hidden;color:#d2d2d2">CharacterMessageWindow (Simple Message Window)</div>
<div class="a" style="left:1248.6px;top:727px;width:15px;height:13px;background:#373737;border-radius:0 2px 2px 0"></div>
<svg style="left:1251.5px;top:728.7px" width="9" height="9" viewBox="0 0 9 9"><circle cx="4.5" cy="4.5" r="3.8" fill="none" stroke="#c8c8c8" stroke-width="1"/><circle cx="4.5" cy="4.5" r="1.6" fill="#c8c8c8"/></svg>
<div class="t b" style="left:891.8px;top:752px;color:#dcdcdc">Error</div>
<div class="t b" style="left:891.8px;top:768px;color:#e0e0e0">Error Voice</div>
<div class="f" style="left:1040.4px;top:767px;width:224.2px;height:15px"></div>
<div class="t b" style="left:1043.4px;top:768px;color:#f0f0f0">Sorry, something wrong!</div>
<div class="t b" style="left:891.8px;top:785px;color:#e0e0e0">Error Face</div>
<div class="f" style="left:1040.4px;top:784px;width:224.2px;height:15px"></div>
<div class="t b" style="left:1043.4px;top:785px;color:#f0f0f0">Sorrow</div>
<div class="a" style="left:875.2px;top:801px;width:393.5px;height:12px;overflow:hidden"><div class="t" style="left:16.59999999999991px;top:2px;color:#c8c8c8">Error Animation Param Key</div><div class="f" style="left:165.20000000000005px;top:1.3px;width:224.2px;height:14.6px"></div></div>
<svg style="left:876px;top:758px" width="330" height="50" viewBox="876 758 330 50"><rect x="882.1" y="765" width="312.4" height="34.6" rx="17.3" ry="17.3" fill="none" stroke="#e9462b" stroke-width="4.4"/></svg>
<svg style="left:1195px;top:816px" width="14" height="14" viewBox="0 0 14 14"><path d="M3 1l2 2.5h3L10 1M2 5l2 1.5M1.5 9H4M2.5 13l2-2.5M10 6.5l1.5-1.5" stroke="#e8b830" stroke-width="1.3" fill="none"/><ellipse cx="6.5" cy="7.5" rx="3" ry="4.5" fill="#e8b830"/><rect x="10.5" y="6" width="1.8" height="5" fill="#e8b830"/><rect x="10.5" y="12" width="1.8" height="1.8" fill="#e8b830"/></svg>
<svg style="left:1217px;top:816px" width="14" height="14" viewBox="0 0 14 14"><ellipse cx="6.5" cy="3.5" rx="5.5" ry="2.5" fill="#c0c0c0"/><path d="M1 6c0 3.4 11 3.4 11 0M1 9c0 3.4 11 3.4 11 0" fill="none" stroke="#c0c0c0" stroke-width="1.4"/><path d="M1.5 1l11 12" stroke="#c0c0c0" stroke-width="1.2"/></svg>
<svg style="left:1239px;top:816px" width="14" height="14" viewBox="0 0 14 14"><circle cx="7" cy="7" r="4.5" fill="none" stroke="#c0c0c0" stroke-width="1.4"/><path d="M1 1l12 12M2 5l-1 3M12 9l1-3" stroke="#c0c0c0" stroke-width="1.2"/><circle cx="7" cy="7" r="1.8" fill="#c0c0c0"/></svg>
<svg style="left:1261.5px;top:816px" width="14" height="14" viewBox="0 0 14 14"><circle cx="7" cy="7" r="5.8" fill="none" stroke="#c4c4c4" stroke-width="1.3"/><path d="M4.3 7.2l2 2 3.6-3.8" fill="none" stroke="#c4c4c4" stroke-width="1.4"/></svg>
<div class="a" style="left:1187.5px;top:814px;width:1px;height:18px;background:#222;"></div>
<div class="a" style="left:1211.5px;top:814px;width:1px;height:18px;background:#222;"></div>
<div class="a" style="left:1234.5px;top:814px;width:1px;height:18px;background:#222;"></div>
<div class="a" style="left:1257.5px;top:814px;width:1px;height:18px;background:#222;"></div>
</div>
</body></html>
